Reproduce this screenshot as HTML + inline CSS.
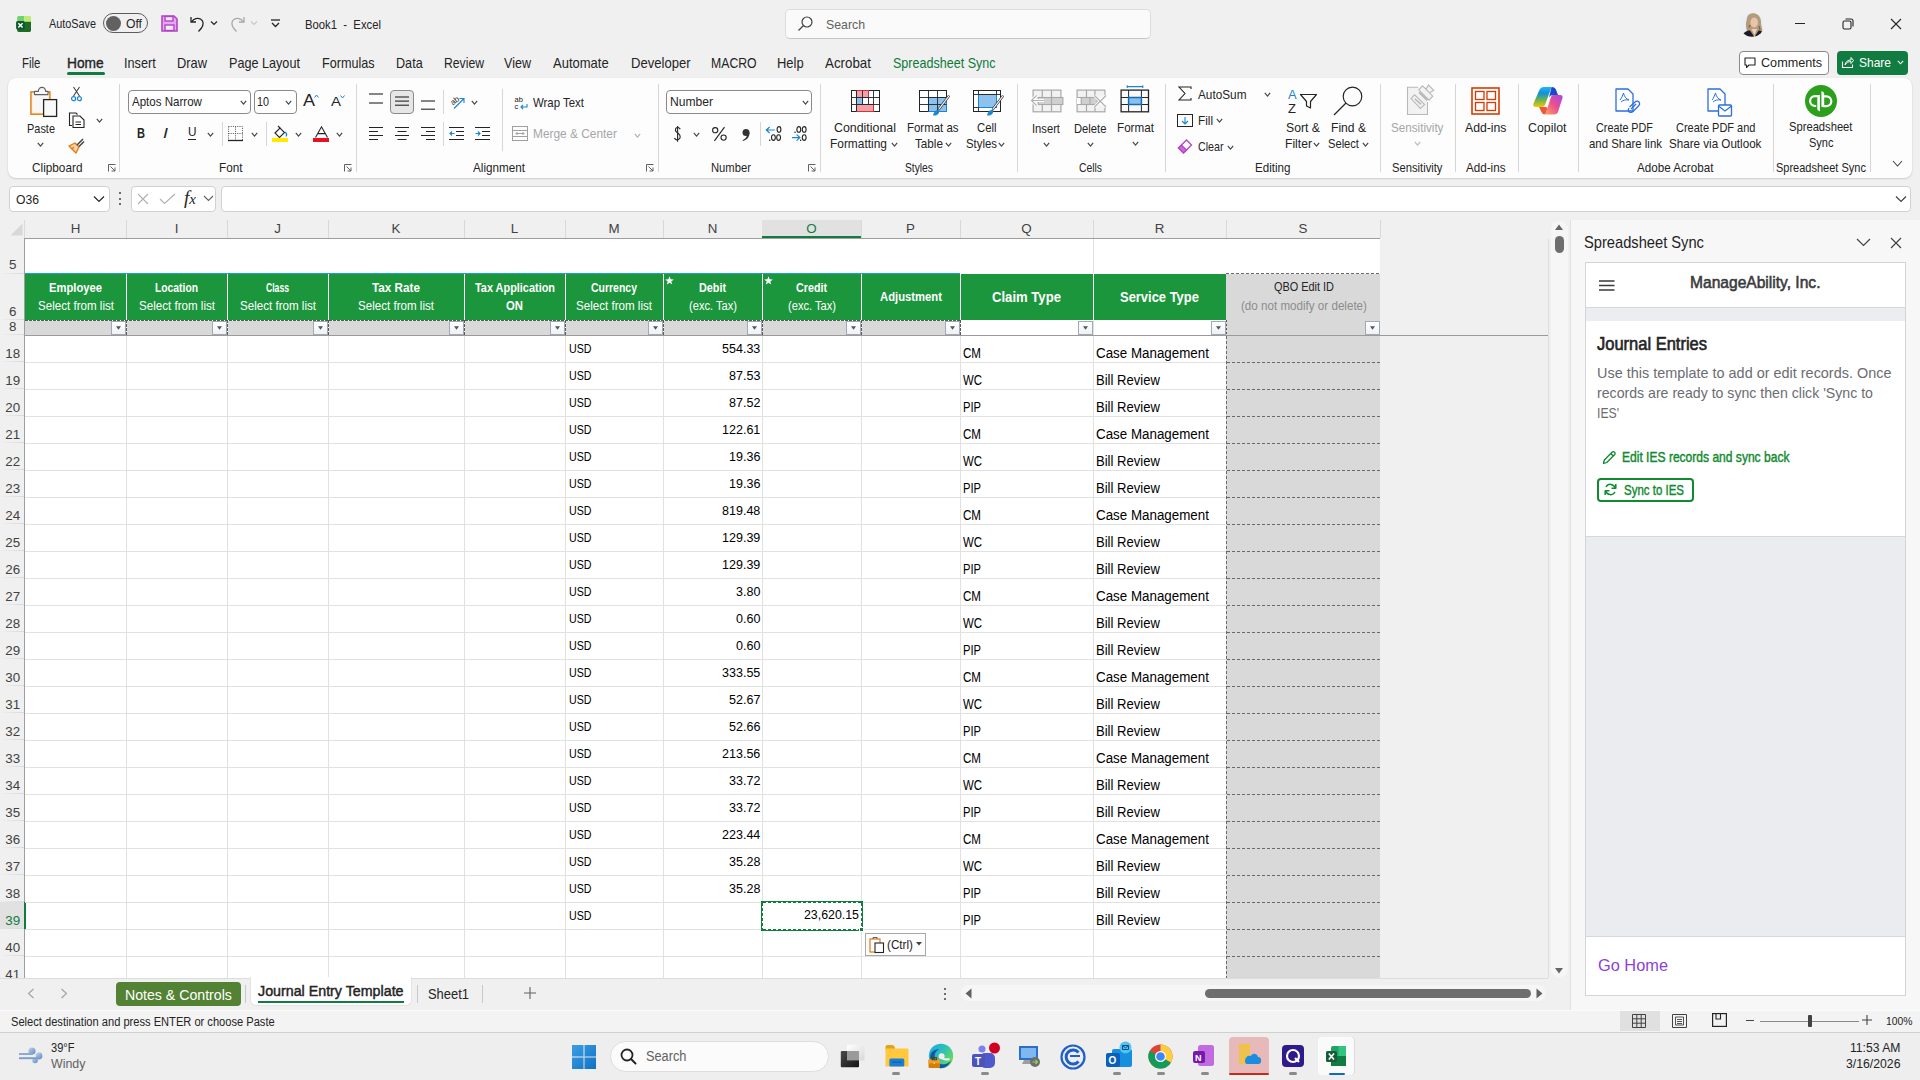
<!DOCTYPE html>
<html><head><meta charset="utf-8"><title>Book1 - Excel</title>
<style>
*{box-sizing:border-box;margin:0;padding:0}
html,body{width:1920px;height:1080px;overflow:hidden;background:#f0f0f0;font-family:"Liberation Sans",sans-serif;color:#242424}
body{position:relative}
.a{position:absolute}
svg.a{overflow:visible}
.t{position:absolute;white-space:pre;font-family:"Liberation Sans",sans-serif}
</style></head><body>
<div class="a" style="left:8px;top:78px;width:1904px;height:100px;background:#fdfdfd;border-radius:8px;box-shadow:0 1px 2px rgba(0,0,0,.14), 0 0 1px rgba(0,0,0,.10);"></div>
<svg class="a" style="left:29px;top:86px;" width="29" height="31" viewBox="0 0 29 31" fill="none"><rect x="1.9" y="5.9" width="19" height="22.3" fill="#fbeccc" stroke="#e07a10" stroke-width="1.4"/>
      <rect x="3.6" y="7.6" width="15.6" height="19" fill="#f7f7f7"/>
      <path d="M5.5 8.6 V5.4 H9.3 C9.5 3 11 1.4 13 1.4 C15 1.4 16.5 3 16.7 5.4 H19 V8.6 Z" fill="#f7f7f7" stroke="#616161" stroke-width="1.1" stroke-linejoin="round"/>
      <rect x="14.6" y="13.6" width="13" height="16.8" fill="#f9f9f9" stroke="#242424" stroke-width="1.3"/></svg>
<div class="t" style="left:27.00px;top:121.63px;font-size:13.20px;line-height:13.20px;color:#242424;transform:scaleX(0.8295);transform-origin:0 0;">Paste</div>
<svg class="a" style="left:37.0px;top:141.5px;" width="7" height="5" viewBox="0 0 7 5" fill="none"><path d="M.8 .8 L3.5 4.2 L6.2 .8" stroke="#424242" stroke-width="1.1"/></svg>
<svg class="a" style="left:71px;top:86px;" width="11" height="16" viewBox="0 0 11 16" fill="none"><path d="M2.5 1 L8.5 10 M8.5 1 L2.5 10" stroke="#424242" stroke-width="1.1"/><circle cx="2.6" cy="12.7" r="2" stroke="#1a86d0" stroke-width="1.2"/><circle cx="8.4" cy="12.7" r="2" stroke="#1a86d0" stroke-width="1.2"/></svg>
<svg class="a" style="left:68px;top:112px;" width="17" height="16" viewBox="0 0 17 16" fill="none"><path d="M4 13.5 H1.5 V1 H8 L9.5 2.5" stroke="#242424" stroke-width="1.1"/><path d="M5 4 H12 L16 8 V15.5 H5 Z" stroke="#242424" stroke-width="1.1"/><path d="M7.5 10 H13 M7.5 12.5 H13" stroke="#242424" stroke-width="1"/></svg>
<svg class="a" style="left:96.1px;top:118.0px;" width="7" height="5" viewBox="0 0 7 5" fill="none"><path d="M.8 .8 L3.5 4.2 L6.2 .8" stroke="#424242" stroke-width="1.1"/></svg>
<svg class="a" style="left:68px;top:137px;" width="17" height="17" viewBox="0 0 17 17" fill="none"><path d="M1 9 L8 16 L11 10 L7 6 Z" fill="#fbd0a0" stroke="#e07a10" stroke-width="1.3" stroke-linejoin="round"/><path d="M9 8 L15 2 M11 9.5 L16 4.5" stroke="#424242" stroke-width="1.5"/><path d="M3.5 12.5 L6 10" stroke="#e07a10" stroke-width="1.2"/></svg>
<div class="t" style="left:32.00px;top:160.63px;font-size:13.20px;line-height:13.20px;color:#242424;transform:scaleX(0.8938);transform-origin:0 0;">Clipboard</div>
<svg class="a" style="left:108px;top:164px;" width="8" height="8" viewBox="0 0 8 8" fill="none"><path d="M.5 7.5 V.5 H7.5" stroke="#616161" stroke-width="1"/><path d="M2.5 2.5 L7 7 M3.5 7 H7 V3.5" stroke="#616161" stroke-width="1"/></svg>
<div class="a" style="left:119px;top:84px;width:1px;height:88px;background:#d6d6d6;"></div>
<div class="a" style="left:128px;top:90px;width:123px;height:24px;background:#fff;border:1px solid #8a8a8a;border-radius:4px;"></div>
<div class="t" style="left:132.00px;top:94.83px;font-size:13.20px;line-height:13.20px;color:#242424;transform:scaleX(0.8754);transform-origin:0 0;">Aptos Narrow</div>
<svg class="a" style="left:240.0px;top:99.5px;" width="7" height="5" viewBox="0 0 7 5" fill="none"><path d="M.8 .8 L3.5 4.2 L6.2 .8" stroke="#424242" stroke-width="1.1"/></svg>
<div class="a" style="left:253.5px;top:90px;width:43px;height:24px;background:#fff;border:1px solid #8a8a8a;border-radius:4px;"></div>
<div class="t" style="left:257.00px;top:94.83px;font-size:13.20px;line-height:13.20px;color:#242424;transform:scaleX(0.8173);transform-origin:0 0;">10</div>
<svg class="a" style="left:285.0px;top:99.5px;" width="7" height="5" viewBox="0 0 7 5" fill="none"><path d="M.8 .8 L3.5 4.2 L6.2 .8" stroke="#424242" stroke-width="1.1"/></svg>
<div class="t" style="left:303.00px;top:91.61px;font-size:17.00px;line-height:17.00px;color:#242424;transform:scaleX(1.0582);transform-origin:0 0;">A</div>
<svg class="a" style="left:314px;top:94px;" width="5" height="4" viewBox="0 0 5 4" fill="none"><path d="M.5 3.5 L2.5 1 L4.5 3.5" stroke="#1a86d0" stroke-width="1"/></svg>
<div class="t" style="left:331.00px;top:95.00px;font-size:13.00px;line-height:13.00px;color:#242424;transform:scaleX(1.1532);transform-origin:0 0;">A</div>
<svg class="a" style="left:340px;top:95px;" width="5" height="4" viewBox="0 0 5 4" fill="none"><path d="M.5 .5 L2.5 3 L4.5 .5" stroke="#1a86d0" stroke-width="1"/></svg>
<div class="t" style="left:136.50px;top:126.15px;font-size:14.00px;line-height:14.00px;color:#242424;font-weight:bold;transform:scaleX(0.7912);transform-origin:0 0;">B</div>
<div class="t" style="left:163.00px;top:126.15px;font-size:14.00px;line-height:14.00px;color:#242424;transform:scaleX(1.2856);transform-origin:0 0;font-style:italic;">I</div>
<div class="t" style="left:187.50px;top:125.00px;font-size:13.00px;line-height:13.00px;color:#242424;transform:scaleX(0.9054);transform-origin:0 0;">U</div>
<div class="a" style="left:187.5px;top:139px;width:8.5px;height:1px;background:#242424;"></div>
<svg class="a" style="left:207.0px;top:131.5px;" width="7" height="5" viewBox="0 0 7 5" fill="none"><path d="M.8 .8 L3.5 4.2 L6.2 .8" stroke="#424242" stroke-width="1.1"/></svg>
<div class="a" style="left:221.5px;top:122px;width:1px;height:24px;background:#d6d6d6;"></div>
<svg class="a" style="left:228px;top:126px;" width="15" height="15" viewBox="0 0 15 15" fill="none"><path d="M.5 .5 H14.5 V14.5 H.5 Z M7.5 .5 V14.5 M.5 7.5 H14.5" stroke="#555" stroke-width="1" stroke-dasharray="1 1.2"/><path d="M0 14.5 H15" stroke="#242424" stroke-width="1.3"/></svg>
<svg class="a" style="left:251.0px;top:131.5px;" width="7" height="5" viewBox="0 0 7 5" fill="none"><path d="M.8 .8 L3.5 4.2 L6.2 .8" stroke="#424242" stroke-width="1.1"/></svg>
<div class="a" style="left:265.5px;top:122px;width:1px;height:24px;background:#d6d6d6;"></div>
<svg class="a" style="left:272px;top:125px;" width="17" height="17" viewBox="0 0 17 17" fill="none"><path d="M3 8 L8 3 L12.5 7.5 L7.5 12.5 Z" stroke="#242424" stroke-width="1.1"/><path d="M8 3 L6 1" stroke="#242424" stroke-width="1.1"/><path d="M13 7 C14.5 8 15 10 14 11.5" stroke="#1a86d0" stroke-width="1.3"/><rect x="0" y="13" width="16" height="4" fill="#ffeb00"/></svg>
<svg class="a" style="left:295.0px;top:131.5px;" width="7" height="5" viewBox="0 0 7 5" fill="none"><path d="M.8 .8 L3.5 4.2 L6.2 .8" stroke="#424242" stroke-width="1.1"/></svg>
<svg class="a" style="left:313px;top:125.5px;" width="17" height="12" viewBox="0 0 17 12" fill="none"><path d="M2.5 11.5 L8.5 .8 L14.5 11.5 M5 7.6 H12" stroke="#242424" stroke-width="1.1"/></svg>
<div class="a" style="left:313px;top:138px;width:16px;height:4px;background:#e81123;"></div>
<svg class="a" style="left:336.0px;top:131.5px;" width="7" height="5" viewBox="0 0 7 5" fill="none"><path d="M.8 .8 L3.5 4.2 L6.2 .8" stroke="#424242" stroke-width="1.1"/></svg>
<div class="t" style="left:218.60px;top:160.63px;font-size:13.20px;line-height:13.20px;color:#242424;transform:scaleX(0.8897);transform-origin:0 0;">Font</div>
<svg class="a" style="left:344px;top:164px;" width="8" height="8" viewBox="0 0 8 8" fill="none"><path d="M.5 7.5 V.5 H7.5" stroke="#616161" stroke-width="1"/><path d="M2.5 2.5 L7 7 M3.5 7 H7 V3.5" stroke="#616161" stroke-width="1"/></svg>
<div class="a" style="left:355.5px;top:84px;width:1px;height:88px;background:#d6d6d6;"></div>
<svg class="a" style="left:369px;top:93px;" width="16" height="12" viewBox="0 0 16 12" fill="none"><path d="M0 1 H14" stroke="#242424" stroke-width="1.1"/><path d="M0 10 H14" stroke="#242424" stroke-width="1.1"/></svg>
<div class="a" style="left:390px;top:90px;width:24px;height:24px;background:#e6e6e6;border:1px solid #8a8a8a;border-radius:4px;"></div>
<svg class="a" style="left:395px;top:96px;" width="16" height="12" viewBox="0 0 16 12" fill="none"><path d="M0 1.0 H14" stroke="#242424" stroke-width="1.1"/><path d="M0 5.1 H14" stroke="#242424" stroke-width="1.1"/><path d="M0 9.2 H14" stroke="#242424" stroke-width="1.1"/></svg>
<svg class="a" style="left:421px;top:100px;" width="16" height="12" viewBox="0 0 16 12" fill="none"><path d="M0 1.0 H14" stroke="#242424" stroke-width="1.1"/><path d="M0 9.2 H14" stroke="#242424" stroke-width="1.1"/></svg>
<div class="a" style="left:442.5px;top:90px;width:1px;height:24px;background:#d6d6d6;"></div>
<svg class="a" style="left:449px;top:93px;" width="17" height="17" viewBox="0 0 17 17" fill="none"><text x="1" y="10" font-size="8" transform="rotate(-40 6 7)" fill="#242424" font-family="Liberation Sans">ab</text><path d="M5 15.5 L15 5.5 M10.5 5.5 H15 V10" stroke="#1a86d0" stroke-width="1.1"/></svg>
<svg class="a" style="left:470.5px;top:99.5px;" width="7" height="5" viewBox="0 0 7 5" fill="none"><path d="M.8 .8 L3.5 4.2 L6.2 .8" stroke="#424242" stroke-width="1.1"/></svg>
<div class="a" style="left:501.5px;top:89px;width:1px;height:62px;background:#d6d6d6;"></div>
<svg class="a" style="left:514px;top:95px;" width="15" height="15" viewBox="0 0 15 15" fill="none"><text x="0.5" y="6.5" font-size="7.5" fill="#242424" font-family="Liberation Sans">ab</text><text x="0.5" y="14" font-size="7.5" fill="#242424" font-family="Liberation Sans">c</text><path d="M13 9 V12 H7 M9 10 L7 12 L9 14" stroke="#1a86d0" stroke-width="1.1"/></svg>
<div class="t" style="left:532.70px;top:95.83px;font-size:13.20px;line-height:13.20px;color:#242424;transform:scaleX(0.8653);transform-origin:0 0;">Wrap Text</div>
<svg class="a" style="left:369px;top:127px;" width="15" height="14" viewBox="0 0 15 14" fill="none"><path d="M0 .5 H14 M0 4.5 H9 M0 8.5 H14 M0 12.5 H9" stroke="#242424" stroke-width="1.1"/></svg>
<svg class="a" style="left:395px;top:127px;" width="15" height="14" viewBox="0 0 15 14" fill="none"><path d="M0 .5 H14 M2.5 4.5 H11.5 M0 8.5 H14 M2.5 12.5 H11.5" stroke="#242424" stroke-width="1.1"/></svg>
<svg class="a" style="left:421px;top:127px;" width="15" height="14" viewBox="0 0 15 14" fill="none"><path d="M0 .5 H14 M5 4.5 H14 M0 8.5 H14 M5 12.5 H14" stroke="#242424" stroke-width="1.1"/></svg>
<div class="a" style="left:442.5px;top:122px;width:1px;height:24px;background:#d6d6d6;"></div>
<svg class="a" style="left:449px;top:127px;" width="16" height="14" viewBox="0 0 16 14" fill="none"><path d="M0 .5 H15 M7 4.5 H15 M7 8.5 H15 M0 12.5 H15" stroke="#242424" stroke-width="1.1"/><path d="M5.5 6.5 H.8 M3 4.5 L1 6.5 L3 8.5" stroke="#1a86d0" stroke-width="1.1"/></svg>
<svg class="a" style="left:475px;top:127px;" width="16" height="14" viewBox="0 0 16 14" fill="none"><path d="M0 .5 H15 M7 4.5 H15 M7 8.5 H15 M0 12.5 H15" stroke="#242424" stroke-width="1.1"/><path d="M.5 6.5 H5.2 M3 4.5 L5 6.5 L3 8.5" stroke="#1a86d0" stroke-width="1.1"/></svg>
<svg class="a" style="left:512px;top:126px;" width="16" height="15" viewBox="0 0 16 15" fill="none"><rect x=".5" y=".5" width="15" height="14" stroke="#a0a0a0" stroke-width="1"/><path d="M.5 4.5 H15.5 M.5 10.5 H15.5 M4 7.5 H12 M5.5 6 L4 7.5 L5.5 9 M10.5 6 L12 7.5 L10.5 9" stroke="#a0a0a0" stroke-width="1"/></svg>
<div class="t" style="left:532.70px;top:127.33px;font-size:13.20px;line-height:13.20px;color:#a6a6a6;transform:scaleX(0.9015);transform-origin:0 0;">Merge &amp; Center</div>
<svg class="a" style="left:634.1px;top:132.5px;" width="7" height="5" viewBox="0 0 7 5" fill="none"><path d="M.8 .8 L3.5 4.2 L6.2 .8" stroke="#b0b0b0" stroke-width="1.1"/></svg>
<div class="t" style="left:472.60px;top:160.63px;font-size:13.20px;line-height:13.20px;color:#242424;transform:scaleX(0.8859);transform-origin:0 0;">Alignment</div>
<svg class="a" style="left:646px;top:164px;" width="8" height="8" viewBox="0 0 8 8" fill="none"><path d="M.5 7.5 V.5 H7.5" stroke="#616161" stroke-width="1"/><path d="M2.5 2.5 L7 7 M3.5 7 H7 V3.5" stroke="#616161" stroke-width="1"/></svg>
<div class="a" style="left:657.5px;top:84px;width:1px;height:88px;background:#d6d6d6;"></div>
<div class="a" style="left:666px;top:90px;width:146px;height:24px;background:#fff;border:1px solid #8a8a8a;border-radius:4px;"></div>
<div class="t" style="left:670.00px;top:94.83px;font-size:13.20px;line-height:13.20px;color:#242424;transform:scaleX(0.9159);transform-origin:0 0;">Number</div>
<svg class="a" style="left:801.5px;top:99.5px;" width="7" height="5" viewBox="0 0 7 5" fill="none"><path d="M.8 .8 L3.5 4.2 L6.2 .8" stroke="#424242" stroke-width="1.1"/></svg>
<svg class="a" style="left:673.5px;top:126px;" width="8" height="16" viewBox="0 0 8 16" fill="none"><path d="M6.2 3.2 C5.6 1.6 4 1.2 3 1.6 C.8 2.4 .9 5.2 3.2 6.6 L4.6 7.7 C6.8 9.4 6.8 12.6 4.2 13.6 C2.6 14.2 1.1 13.6 .4 12.1" stroke="#242424" stroke-width="1.1"/><path d="M3.6 0 V15.8" stroke="#242424" stroke-width="1.1"/></svg>
<svg class="a" style="left:692.5px;top:131.5px;" width="7" height="5" viewBox="0 0 7 5" fill="none"><path d="M.8 .8 L3.5 4.2 L6.2 .8" stroke="#424242" stroke-width="1.1"/></svg>
<svg class="a" style="left:711.5px;top:127px;" width="15" height="14" viewBox="0 0 15 14" fill="none"><circle cx="3.2" cy="3.2" r="2.6" stroke="#242424" stroke-width="1.1"/><circle cx="11.6" cy="10.6" r="2.6" stroke="#242424" stroke-width="1.1"/><path d="M12.5 .2 L2.4 13.8" stroke="#242424" stroke-width="1.1"/></svg>
<svg class="a" style="left:741.5px;top:128.5px;" width="8" height="12" viewBox="0 0 8 12" fill="none"><circle cx="4" cy="3.6" r="3.5" fill="#333"/><path d="M7.5 3.6 C7.6 8 5.2 11.1 1 12 L.6 11.2 C3.6 10 5 8 5 5.8 Z" fill="#333"/></svg>
<div class="a" style="left:759.5px;top:122px;width:1px;height:24px;background:#d6d6d6;"></div>
<svg class="a" style="left:765px;top:126px;" width="17" height="16" viewBox="0 0 17 16" fill="none"><path d="M9.8 4 H1.5 M4.6 1 L1.3 4 L4.6 7" stroke="#1a86d0" stroke-width="1.2"/><ellipse cx="14" cy="3.4" rx="1.9" ry="2.8" stroke="#242424" stroke-width="1.1"/><rect x="4" y="13.6" width="1.3" height="1.3" fill="#242424"/><ellipse cx="8.4" cy="11.6" rx="1.9" ry="2.8" stroke="#242424" stroke-width="1.1"/><ellipse cx="13.6" cy="11.6" rx="1.9" ry="2.8" stroke="#242424" stroke-width="1.1"/></svg>
<svg class="a" style="left:791px;top:126px;" width="17" height="16" viewBox="0 0 17 16" fill="none"><rect x="3.4" y="5.6" width="1.3" height="1.3" fill="#242424"/><ellipse cx="7.8" cy="3.4" rx="1.9" ry="2.8" stroke="#242424" stroke-width="1.1"/><ellipse cx="13.2" cy="3.4" rx="1.9" ry="2.8" stroke="#242424" stroke-width="1.1"/><path d="M1 11.6 H8.6 M5.6 8.6 L8.9 11.6 L5.6 14.6" stroke="#1a86d0" stroke-width="1.2"/><rect x="9" y="13.6" width="1.3" height="1.3" fill="#242424"/><ellipse cx="13.2" cy="11.6" rx="1.9" ry="2.8" stroke="#242424" stroke-width="1.1"/></svg>
<div class="t" style="left:710.90px;top:160.63px;font-size:13.20px;line-height:13.20px;color:#242424;transform:scaleX(0.8520);transform-origin:0 0;">Number</div>
<svg class="a" style="left:808px;top:164px;" width="8" height="8" viewBox="0 0 8 8" fill="none"><path d="M.5 7.5 V.5 H7.5" stroke="#616161" stroke-width="1"/><path d="M2.5 2.5 L7 7 M3.5 7 H7 V3.5" stroke="#616161" stroke-width="1"/></svg>
<div class="a" style="left:819.5px;top:84px;width:1px;height:88px;background:#d6d6d6;"></div>
<svg class="a" style="left:851px;top:90px;" width="29" height="22" viewBox="0 0 29 22" fill="none"><rect x=".5" y=".5" width="28" height="21" fill="#fff" stroke="#242424" stroke-width="1"/>
      <rect x="5.5" y=".5" width="12" height="7" fill="#f4a0a8" stroke="#d13438" stroke-width="1"/>
      <rect x="5.5" y="7.5" width="6" height="7" fill="#8dc1ef" stroke="#1a86d0" stroke-width="1"/>
      <rect x="5.5" y="14.5" width="17" height="7" fill="#f4a0a8" stroke="#d13438" stroke-width="1"/>
      <path d="M5.5 .5 V21.5 M17.5 7.5 V14.5 M22.5 .5 V14.5 M11.5 .5 V7.5 M11.5 14.5 V7.5 M.5 7.5 H28.5 M.5 14.5 H28.5" stroke="#242424" stroke-width=".9"/></svg>
<div class="t" style="left:834.00px;top:120.83px;font-size:13.20px;line-height:13.20px;color:#242424;transform:scaleX(0.9387);transform-origin:0 0;">Conditional</div>
<div class="t" style="left:830.40px;top:136.53px;font-size:13.20px;line-height:13.20px;color:#242424;transform:scaleX(0.9035);transform-origin:0 0;">Formatting</div>
<svg class="a" style="left:890.5px;top:142.0px;" width="7" height="5" viewBox="0 0 7 5" fill="none"><path d="M.8 .8 L3.5 4.2 L6.2 .8" stroke="#424242" stroke-width="1.1"/></svg>
<svg class="a" style="left:919px;top:90px;" width="31" height="28" viewBox="0 0 31 28" fill="none"><rect x=".5" y=".5" width="27" height="21" fill="#fff" stroke="#242424" stroke-width="1"/>
      <rect x="9.5" y="7.5" width="18" height="14" fill="#8dc1ef" stroke="#1a86d0"/>
      <path d="M9.5 .5 V21.5 M18.5 .5 V21.5 M.5 7.5 H27.5 M.5 14.5 H27.5" stroke="#242424" stroke-width=".9"/>
      <path d="M29.5 6.5 L20 19" stroke="#424242" stroke-width="2.6" stroke-linecap="round"/><path d="M29.5 6.5 L20 19" stroke="#fff" stroke-width="1.2" stroke-linecap="round"/>
      <path d="M14 25.5 C15 21 17 19.5 20 20 C21 22 19.5 26 14 25.5 Z" fill="#1a86d0"/></svg>
<div class="t" style="left:907.40px;top:120.83px;font-size:13.20px;line-height:13.20px;color:#242424;transform:scaleX(0.8668);transform-origin:0 0;">Format as</div>
<div class="t" style="left:915.00px;top:136.53px;font-size:13.20px;line-height:13.20px;color:#242424;transform:scaleX(0.8873);transform-origin:0 0;">Table</div>
<svg class="a" style="left:945.0px;top:142.0px;" width="7" height="5" viewBox="0 0 7 5" fill="none"><path d="M.8 .8 L3.5 4.2 L6.2 .8" stroke="#424242" stroke-width="1.1"/></svg>
<svg class="a" style="left:973px;top:90px;" width="31" height="28" viewBox="0 0 31 28" fill="none"><rect x=".5" y=".5" width="27" height="21" fill="#fff" stroke="#242424" stroke-width="1"/>
      <rect x="5.5" y="4.5" width="18" height="13" fill="#8dc1ef" stroke="#1a86d0"/>
      <path d="M.5 4.5 H27.5 M5.5 .5 V4.5 M23.5 .5 V4.5 M.5 17.5 H5.5 M5.5 17.5 V21.5" stroke="#242424" stroke-width=".9"/>
      <path d="M29.5 6.5 L20 19" stroke="#424242" stroke-width="2.6" stroke-linecap="round"/><path d="M29.5 6.5 L20 19" stroke="#fff" stroke-width="1.2" stroke-linecap="round"/>
      <path d="M14 25.5 C15 21 17 19.5 20 20 C21 22 19.5 26 14 25.5 Z" fill="#1a86d0"/></svg>
<div class="t" style="left:977.00px;top:120.83px;font-size:13.20px;line-height:13.20px;color:#242424;transform:scaleX(0.8575);transform-origin:0 0;">Cell</div>
<div class="t" style="left:966.00px;top:136.53px;font-size:13.20px;line-height:13.20px;color:#242424;transform:scaleX(0.8624);transform-origin:0 0;">Styles</div>
<svg class="a" style="left:998.0px;top:142.0px;" width="7" height="5" viewBox="0 0 7 5" fill="none"><path d="M.8 .8 L3.5 4.2 L6.2 .8" stroke="#424242" stroke-width="1.1"/></svg>
<div class="t" style="left:904.50px;top:160.63px;font-size:13.20px;line-height:13.20px;color:#242424;transform:scaleX(0.7789);transform-origin:0 0;">Styles</div>
<div class="a" style="left:1017px;top:84px;width:1px;height:88px;background:#d6d6d6;"></div>
<svg class="a" style="left:1030px;top:89px;" width="34" height="24" viewBox="0 0 34 24" fill="none"><rect x="3.1" y="1.1" width="27.8" height="21.7" fill="#f2f2f2" stroke="#a8a8a8" stroke-width="1.2"/>
      <path d="M12.3 1.1 V22.8 M21.5 1.1 V22.8" stroke="#a8a8a8" stroke-width="1.2"/>
      <rect x="8.2" y="8.5" width="24.7" height="7" fill="#d0d0d0" stroke="#a8a8a8" stroke-width="1.1"/>
      <path d="M21.5 8.5 V15.5" stroke="#a8a8a8" stroke-width="1.1"/>
      <path d="M14 11.5 H2 M6.5 6.5 L1.5 11.5 L6.5 16.5" stroke="#ffffff" stroke-width="3"/>
      <path d="M14 11.5 H2 M6.5 6.5 L1.5 11.5 L6.5 16.5" stroke="#b0b0b0" stroke-width="1.2"/></svg>
<div class="t" style="left:1032.40px;top:121.83px;font-size:13.20px;line-height:13.20px;color:#242424;transform:scaleX(0.8481);transform-origin:0 0;">Insert</div>
<svg class="a" style="left:1042.5px;top:142.0px;" width="7" height="5" viewBox="0 0 7 5" fill="none"><path d="M.8 .8 L3.5 4.2 L6.2 .8" stroke="#424242" stroke-width="1.1"/></svg>
<svg class="a" style="left:1076px;top:89px;" width="32" height="24" viewBox="0 0 32 24" fill="none"><rect x="1.1" y="1.1" width="27.8" height="21.7" fill="#f2f2f2" stroke="#a8a8a8" stroke-width="1.2"/>
      <path d="M10.5 1.1 V22.8 M19 1.1 V22.8" stroke="#a8a8a8" stroke-width="1.2"/>
      <rect x="1" y="8.5" width="29" height="7" fill="#ffffff" stroke="none"/>
      <path d="M1.1 8.5 H22 M1.1 15.5 H22" stroke="#a8a8a8" stroke-width="1.2"/>
      <rect x="5.2" y="8.5" width="16" height="7" fill="#d0d0d0" stroke="#a8a8a8" stroke-width="1.1"/>
      <path d="M14 8.5 V15.5" stroke="#a8a8a8" stroke-width="1.1"/>
      <path d="M18.5 6.5 L30 18 M30 6.5 L18.5 18" stroke="#ffffff" stroke-width="3"/>
      <path d="M18.5 6.5 L30 18 M30 6.5 L18.5 18" stroke="#b0b0b0" stroke-width="1.2"/></svg>
<div class="t" style="left:1074.40px;top:121.83px;font-size:13.20px;line-height:13.20px;color:#242424;transform:scaleX(0.8517);transform-origin:0 0;">Delete</div>
<svg class="a" style="left:1087.0px;top:142.0px;" width="7" height="5" viewBox="0 0 7 5" fill="none"><path d="M.8 .8 L3.5 4.2 L6.2 .8" stroke="#424242" stroke-width="1.1"/></svg>
<svg class="a" style="left:1120px;top:85px;" width="30" height="28" viewBox="0 0 30 28" fill="none"><path d="M7.2 1.6 H22.8 M7.2 .2 V3 M22.8 .2 V3" stroke="#1a86d0" stroke-width="1.1"/>
      <rect x="1.1" y="5.1" width="27.4" height="21.7" fill="#fafafa" stroke="#242424" stroke-width="1.3"/>
      <path d="M8.6 5.1 V26.8 M21.4 5.1 V26.8 M1.1 12.5 H28.5 M1.1 19.5 H28.5" stroke="#242424" stroke-width="1"/>
      <rect x="8.6" y="12.5" width="12.8" height="7" fill="#8cc0ec" stroke="#0f6cbd" stroke-width="1.5"/></svg>
<div class="t" style="left:1116.50px;top:120.63px;font-size:13.20px;line-height:13.20px;color:#242424;transform:scaleX(0.8850);transform-origin:0 0;">Format</div>
<svg class="a" style="left:1131.5px;top:141.0px;" width="7" height="5" viewBox="0 0 7 5" fill="none"><path d="M.8 .8 L3.5 4.2 L6.2 .8" stroke="#424242" stroke-width="1.1"/></svg>
<div class="t" style="left:1079.00px;top:160.63px;font-size:13.20px;line-height:13.20px;color:#242424;transform:scaleX(0.7839);transform-origin:0 0;">Cells</div>
<div class="a" style="left:1164.5px;top:84px;width:1px;height:88px;background:#d6d6d6;"></div>
<svg class="a" style="left:1178px;top:86px;" width="14" height="15" viewBox="0 0 14 15" fill="none"><path d="M13 3 V1 H1 L7 7.5 L1 14 H13 V12" stroke="#242424" stroke-width="1.1"/></svg>
<div class="t" style="left:1197.50px;top:88.03px;font-size:13.20px;line-height:13.20px;color:#242424;transform:scaleX(0.8932);transform-origin:0 0;">AutoSum</div>
<svg class="a" style="left:1263.9px;top:92.0px;" width="7" height="5" viewBox="0 0 7 5" fill="none"><path d="M.8 .8 L3.5 4.2 L6.2 .8" stroke="#424242" stroke-width="1.1"/></svg>
<svg class="a" style="left:1177px;top:112px;" width="16" height="15" viewBox="0 0 16 15" fill="none"><rect x=".5" y="2.5" width="15" height="12" stroke="#242424"/><path d="M.5 2.5 H15.5" stroke="#242424" stroke-width="1"/><path d="M8 5 V12 M5 9 L8 12 L11 9" stroke="#1a86d0" stroke-width="1.1"/></svg>
<div class="t" style="left:1197.50px;top:113.83px;font-size:13.20px;line-height:13.20px;color:#242424;transform:scaleX(0.8896);transform-origin:0 0;">Fill</div>
<svg class="a" style="left:1215.5px;top:117.5px;" width="7" height="5" viewBox="0 0 7 5" fill="none"><path d="M.8 .8 L3.5 4.2 L6.2 .8" stroke="#424242" stroke-width="1.1"/></svg>
<svg class="a" style="left:1177px;top:138px;" width="16" height="16" viewBox="0 0 16 16" fill="none"><path d="M1.5 10 L9.5 2 L14.5 7 L6.5 15 Z" fill="#fff" stroke="#b146c2" stroke-width="1.3"/><path d="M1.5 10 L4.5 7 L9.5 12 L6.5 15 Z" fill="#c86dd7" stroke="#b146c2" stroke-width="1.2"/></svg>
<div class="t" style="left:1197.50px;top:140.13px;font-size:13.20px;line-height:13.20px;color:#242424;transform:scaleX(0.8084);transform-origin:0 0;">Clear</div>
<svg class="a" style="left:1226.5px;top:144.5px;" width="7" height="5" viewBox="0 0 7 5" fill="none"><path d="M.8 .8 L3.5 4.2 L6.2 .8" stroke="#424242" stroke-width="1.1"/></svg>
<svg class="a" style="left:1288px;top:87px;" width="31" height="27" viewBox="0 0 31 27" fill="none"><text x="0" y="12" font-size="13" fill="#1a86d0" font-family="Liberation Sans">A</text><text x="0" y="26" font-size="13" fill="#242424" font-family="Liberation Sans">Z</text><path d="M12.5 7.5 H28.5 L22.5 14.5 V21 L18.5 19 V14.5 Z" stroke="#242424" stroke-width="1.2" stroke-linejoin="round"/></svg>
<div class="t" style="left:1286.00px;top:120.63px;font-size:13.20px;line-height:13.20px;color:#242424;transform:scaleX(0.9269);transform-origin:0 0;">Sort &amp;</div>
<div class="t" style="left:1284.70px;top:136.53px;font-size:13.20px;line-height:13.20px;color:#242424;transform:scaleX(0.9204);transform-origin:0 0;">Filter</div>
<svg class="a" style="left:1312.5px;top:142.0px;" width="7" height="5" viewBox="0 0 7 5" fill="none"><path d="M.8 .8 L3.5 4.2 L6.2 .8" stroke="#424242" stroke-width="1.1"/></svg>
<svg class="a" style="left:1333px;top:86px;" width="31" height="30" viewBox="0 0 31 30" fill="none"><circle cx="19.5" cy="10.5" r="9.3" stroke="#242424" stroke-width="1.2"/><path d="M13 17 L1 29" stroke="#242424" stroke-width="1.3"/></svg>
<div class="t" style="left:1331.40px;top:120.63px;font-size:13.20px;line-height:13.20px;color:#242424;transform:scaleX(0.9174);transform-origin:0 0;">Find &amp;</div>
<div class="t" style="left:1328.00px;top:136.53px;font-size:13.20px;line-height:13.20px;color:#242424;transform:scaleX(0.8450);transform-origin:0 0;">Select</div>
<svg class="a" style="left:1361.5px;top:142.0px;" width="7" height="5" viewBox="0 0 7 5" fill="none"><path d="M.8 .8 L3.5 4.2 L6.2 .8" stroke="#424242" stroke-width="1.1"/></svg>
<div class="t" style="left:1254.60px;top:160.63px;font-size:13.20px;line-height:13.20px;color:#242424;transform:scaleX(0.8795);transform-origin:0 0;">Editing</div>
<div class="a" style="left:1380px;top:84px;width:1px;height:88px;background:#d6d6d6;"></div>
<svg class="a" style="left:1400px;top:82px;" width="40" height="36" viewBox="0 0 40 36" fill="none"><rect x="7.5" y="5.3" width="20" height="27.2" fill="#f2f2f2"/><path d="M18 5.3 H7.5 V32.5 H27.5 V20" stroke="#b8b8b8" stroke-width="1.1"/><path d="M11 16.6 L14.6 12.8 L24.6 22.5 L20.4 26.4 Z" fill="#f2f2f2" stroke="#b8b8b8" stroke-width="1.1"/><path d="M14.8 16.8 L21 22.4" stroke="#b8b8b8" stroke-width="1.5"/><path d="M26 7.6 L28.4 3 L33.8 8.4 L30 10.6" fill="#f2f2f2" stroke="#b8b8b8" stroke-width="1.1"/><path d="M18.8 7.8 L22.6 3.8 L32.8 14.2 L29 18.2 Z" fill="#f2f2f2" stroke="#b8b8b8" stroke-width="1.1"/><path d="M19.2 10.2 L27.4 18.2" stroke="#b8b8b8" stroke-width="2.2"/></svg>
<div class="t" style="left:1391.40px;top:120.83px;font-size:13.20px;line-height:13.20px;color:#a6a6a6;transform:scaleX(0.8835);transform-origin:0 0;">Sensitivity</div>
<svg class="a" style="left:1414.0px;top:141.0px;" width="7" height="5" viewBox="0 0 7 5" fill="none"><path d="M.8 .8 L3.5 4.2 L6.2 .8" stroke="#b8b8b8" stroke-width="1.1"/></svg>
<div class="t" style="left:1392.40px;top:160.63px;font-size:13.20px;line-height:13.20px;color:#242424;transform:scaleX(0.8499);transform-origin:0 0;">Sensitivity</div>
<div class="a" style="left:1454.5px;top:84px;width:1px;height:88px;background:#d6d6d6;"></div>
<svg class="a" style="left:1471px;top:87px;" width="29" height="28" viewBox="0 0 29 28" fill="none"><rect x="1" y="1" width="27" height="26" stroke="#d83b01" stroke-width="1.6"/><rect x="4.5" y="4.5" width="8.5" height="8" stroke="#d83b01" stroke-width="1.3"/><rect x="16" y="4.5" width="8.5" height="8" stroke="#d83b01" stroke-width="1.3"/><rect x="4.5" y="15.5" width="8.5" height="8" stroke="#d83b01" stroke-width="1.3"/><rect x="16" y="15.5" width="8.5" height="8" stroke="#d83b01" stroke-width="1.3"/></svg>
<div class="t" style="left:1465.30px;top:120.83px;font-size:13.20px;line-height:13.20px;color:#242424;transform:scaleX(0.9272);transform-origin:0 0;">Add-ins</div>
<div class="t" style="left:1466.00px;top:160.63px;font-size:13.20px;line-height:13.20px;color:#242424;transform:scaleX(0.8825);transform-origin:0 0;">Add-ins</div>
<div class="a" style="left:1517.5px;top:84px;width:1px;height:88px;background:#d6d6d6;"></div>
<svg class="a" style="left:1533px;top:87px;" width="30" height="28" viewBox="0 0 30 28" fill="none"><defs><linearGradient id="cpA" x1="0" y1="0" x2="0" y2="1"><stop offset="0" stop-color="#22b4f8"/><stop offset=".3" stop-color="#1190d8"/><stop offset=".6" stop-color="#5cb060"/><stop offset="1" stop-color="#f2c800"/></linearGradient>
      <linearGradient id="cpB" x1="1" y1="0" x2="0" y2="1"><stop offset="0" stop-color="#a246ec"/><stop offset=".5" stop-color="#ea5090"/><stop offset="1" stop-color="#fba358"/></linearGradient></defs>
      <path d="M18.5 0 Q22.5 0 23.5 4 L25 8 H19.5 Q17 8 16 10.5 Z" fill="#1a48d0"/>
      <path d="M6 20 H12.8 Q14.8 20 14.3 22 L12.3 27.5 Q9.3 27.5 8.5 25 Z" fill="#f0563a"/>
      <path d="M6.6 2.6 Q7.6 0 10.6 0 H18.5 L12 18 Q11 20 8.5 20 H2.6 Q-.2 20 .3 17 Z" fill="url(#cpA)"/>
      <path d="M19.8 8 H27 Q30.2 8 29.4 11.2 L24.8 25.4 Q23.8 27.5 21.3 27.5 H12.3 L18 10 Q18.7 8 19.8 8 Z" fill="url(#cpB)"/></svg>
<div class="t" style="left:1528.40px;top:120.83px;font-size:13.20px;line-height:13.20px;color:#242424;transform:scaleX(0.9370);transform-origin:0 0;">Copilot</div>
<div class="a" style="left:1577.5px;top:84px;width:1px;height:88px;background:#d6d6d6;"></div>
<svg class="a" style="left:1614px;top:88px;" width="28" height="30" viewBox="0 0 28 30" fill="none"><path d="M2 1 H14 L19 6 V23 H2 Z" stroke="#2c6ee0" stroke-width="1.3" stroke-linejoin="round" fill="#fff"/><path d="M6 12 C8 10 9 6 9.5 5 C10 8 12 11 15 12 M7 14 C9 12 12 11.5 15 12" stroke="#2c6ee0" stroke-width="1"/><path d="M15.5 19 L21 14 C22.5 12.5 25 13 25.5 15 C26 16 25.5 17 24.5 18 L19 23.5 C17.5 25 15 24.5 14.5 23 C14 22 14.3 21 15 20 M17 21 L22 16" stroke="#2c6ee0" stroke-width="1.3"/></svg>
<div class="t" style="left:1596.30px;top:120.83px;font-size:13.20px;line-height:13.20px;color:#242424;transform:scaleX(0.8179);transform-origin:0 0;">Create PDF</div>
<div class="t" style="left:1588.50px;top:136.53px;font-size:13.20px;line-height:13.20px;color:#242424;transform:scaleX(0.8650);transform-origin:0 0;">and Share link</div>
<svg class="a" style="left:1706px;top:88px;" width="27" height="30" viewBox="0 0 27 30" fill="none"><path d="M2 1 H14 L19 6 V23 H2 Z" stroke="#2c6ee0" stroke-width="1.3" stroke-linejoin="round" fill="#fff"/><path d="M6 12 C8 10 9 6 9.5 5 C10 8 12 11 15 12 M7 14 C9 12 12 11.5 15 12" stroke="#2c6ee0" stroke-width="1"/><rect x="12.5" y="17" width="13" height="11" rx="1" fill="#fff" stroke="#2c6ee0" stroke-width="1.3"/><path d="M12.5 18 L19 23 L25.5 18" stroke="#2c6ee0" stroke-width="1.2"/></svg>
<div class="t" style="left:1675.60px;top:120.83px;font-size:13.20px;line-height:13.20px;color:#242424;transform:scaleX(0.8335);transform-origin:0 0;">Create PDF and</div>
<div class="t" style="left:1669.40px;top:136.53px;font-size:13.20px;line-height:13.20px;color:#242424;transform:scaleX(0.8816);transform-origin:0 0;">Share via Outlook</div>
<div class="t" style="left:1637.00px;top:160.63px;font-size:13.20px;line-height:13.20px;color:#242424;transform:scaleX(0.8833);transform-origin:0 0;">Adobe Acrobat</div>
<div class="a" style="left:1772.5px;top:84px;width:1px;height:88px;background:#d6d6d6;"></div>
<svg class="a" style="left:1805px;top:85px;" width="32" height="32" viewBox="0 0 32 32" fill="none"><circle cx="16" cy="16" r="16" fill="#2ca01c"/><path d="M13.6 11.2 H10 A4.9 4.9 0 0 0 10 21 H11.2" stroke="#fff" stroke-width="2.2"/><path d="M12.3 10.1 H14.9 V26.2 C13.3 26 12.3 25 12.3 23.5 Z" fill="#fff"/><path d="M18 11.3 H21.4 A4.9 4.9 0 0 1 21.4 21.1 H18" stroke="#fff" stroke-width="2.2"/><path d="M16.4 6.2 C17.9 6.3 19.2 7.3 19.2 8.8 V22.1 H16.4 Z" fill="#fff"/></svg>
<div class="t" style="left:1789.30px;top:119.83px;font-size:13.20px;line-height:13.20px;color:#242424;transform:scaleX(0.8483);transform-origin:0 0;">Spreadsheet</div>
<div class="t" style="left:1808.90px;top:135.83px;font-size:13.20px;line-height:13.20px;color:#242424;transform:scaleX(0.8349);transform-origin:0 0;">Sync</div>
<div class="t" style="left:1776.00px;top:160.63px;font-size:13.20px;line-height:13.20px;color:#242424;transform:scaleX(0.8343);transform-origin:0 0;">Spreadsheet Sync</div>
<div class="a" style="left:1869.5px;top:84px;width:1px;height:88px;background:#d6d6d6;"></div>
<svg class="a" style="left:1892px;top:160px;" width="11" height="7" viewBox="0 0 11 7" fill="none"><path d="M1 1 L5.5 6 L10 1" stroke="#424242" stroke-width="1.1"/></svg>
<svg class="a" style="left:15px;top:15px;" width="17" height="17" viewBox="0 0 17 17" fill="none"><path d="M2.2 6.8 V2.6 C2.2 1.7 2.9 1 3.8 1 H9.2 V6.8 Z" fill="#6fd36a"/>
      <path d="M9.2 1 H15 C15.6 1 16 1.4 16 2 V6.8 H9.2 Z" fill="#bdeb73"/>
      <path d="M2.2 6.8 H16 V15.6 C16 16.4 15.4 17 14.6 17 H3.6 C2.8 17 2.2 16.4 2.2 15.6 Z" fill="#1e6b26"/>
      <rect x="1.1" y="6" width="8.6" height="8.6" rx="1.6" fill="#0b5630"/>
      <path d="M3.3 8.2 L7.6 12.6 M7.6 8.2 L3.3 12.6" stroke="#fff" stroke-width="1.5"/></svg>
<div class="t" style="left:48.50px;top:16.77px;font-size:13.50px;line-height:13.50px;color:#242424;transform:scaleX(0.8028);transform-origin:0 0;">AutoSave</div>
<div class="a" style="left:103px;top:13px;width:45px;height:20px;border:1.2px solid #5c5c5c;border-radius:10px;"></div>
<div class="a" style="left:105.5px;top:15.5px;width:15px;height:15px;background:#616161;border-radius:50%;"></div>
<div class="t" style="left:125.50px;top:16.77px;font-size:13.50px;line-height:13.50px;color:#242424;transform:scaleX(0.9010);transform-origin:0 0;">Off</div>
<svg class="a" style="left:161px;top:15px;" width="17" height="17" viewBox="0 0 17 17" fill="none"><path d="M1 1 H13 L16 4 V16 H1 Z" fill="#e8a6f0" stroke="#b146c2" stroke-width="1.6"/>
      <rect x="4" y="1.5" width="8" height="4.5" fill="#f6e6f8" stroke="#b146c2" stroke-width="1.4"/>
      <rect x="4" y="10" width="9" height="5.5" fill="#f6e6f8" stroke="#b146c2" stroke-width="1.4"/></svg>
<svg class="a" style="left:189px;top:15px;" width="17" height="17" viewBox="0 0 17 17" fill="none"><path d="M2 2 V7 H7" stroke="#242424" stroke-width="1.3"/><path d="M2.5 7 C5 2.5 11 2 13.5 6 C15.5 9.5 13 13 9.5 16.5" stroke="#242424" stroke-width="1.3"/></svg>
<svg class="a" style="left:210px;top:20px;" width="8" height="6" viewBox="0 0 8 6" fill="none"><path d="M1 1.5 L4 4.5 L7 1.5" stroke="#242424" stroke-width="1.2"/></svg>
<svg class="a" style="left:229px;top:15px;" width="17" height="17" viewBox="0 0 17 17" fill="none"><path d="M15 2 V7 H10" stroke="#a8a8a8" stroke-width="1.3"/><path d="M14.5 7 C12 2.5 6 2 3.5 6 C1.5 9.5 4 13 7.5 16.5" stroke="#a8a8a8" stroke-width="1.3"/></svg>
<svg class="a" style="left:250px;top:20px;" width="8" height="6" viewBox="0 0 8 6" fill="none"><path d="M1 1.5 L4 4.5 L7 1.5" stroke="#c8c8c8" stroke-width="1.2"/></svg>
<svg class="a" style="left:270px;top:19px;" width="11" height="9" viewBox="0 0 11 9" fill="none"><path d="M1 1 H10" stroke="#242424" stroke-width="1.3"/><path d="M2 4 L5.5 7.5 L9 4" stroke="#242424" stroke-width="1.3"/></svg>
<div class="t" style="left:305.00px;top:17.57px;font-size:13.50px;line-height:13.50px;color:#242424;transform:scaleX(0.8371);transform-origin:0 0;">Book1  -  Excel</div>
<div class="a" style="left:785px;top:9px;width:366px;height:30px;background:#fafafa;border:1px solid #dcdcdc;border-bottom-color:#c4c4c4;border-radius:5px;"></div>
<svg class="a" style="left:797px;top:16px;" width="16" height="16" viewBox="0 0 16 16" fill="none"><circle cx="10" cy="6" r="5" stroke="#424242" stroke-width="1.2"/><path d="M6.5 9.5 L1.5 14.5" stroke="#424242" stroke-width="1.3"/></svg>
<div class="t" style="left:826.00px;top:17.57px;font-size:13.50px;line-height:13.50px;color:#616161;transform:scaleX(0.9117);transform-origin:0 0;">Search</div>
<svg class="a" style="left:1740px;top:12px;" width="24" height="25" viewBox="0 0 24 25" fill="none"><defs><clipPath id="av"><circle cx="12" cy="12.5" r="12.2"/></clipPath></defs>
      <g clip-path="url(#av)"><rect width="24" height="25" fill="#eceef5"/>
      <path d="M7 6 C8 1.5 12 1 15 1.5 C19 2.5 21 6 21 10 C21 14 22.5 17 23 21 L17 24 L9 23 C7 20 5.5 16 6 11 Z" fill="#b29c7c"/>
      <ellipse cx="14.2" cy="10.5" rx="3.8" ry="4.9" fill="#e7c4aa"/>
      <path d="M9 15.5 L10 13 M19 14 L20 18" stroke="#7d6648" stroke-width="1.2"/>
      <path d="M1.5 25 C3 21 6 18.5 10 18.5 L14.5 25 L18.5 18.5 C21 18.5 23 20 24 22 V25 Z" fill="#1a1b29"/>
      <path d="M11.5 17 H17 L14.5 23 Z" fill="#ecd0ba"/></g></svg>
<div class="a" style="left:1795px;top:23px;width:10px;height:1.2px;background:#242424;"></div>
<svg class="a" style="left:1842px;top:18px;" width="12" height="12" viewBox="0 0 12 12" fill="none"><rect x="1" y="3" width="8" height="8" rx="1.5" stroke="#242424" stroke-width="1.1"/><path d="M3.5 1 H9 A2 2 0 0 1 11 3 V8.5" stroke="#242424" stroke-width="1.1"/></svg>
<svg class="a" style="left:1890px;top:18px;" width="12" height="12" viewBox="0 0 12 12" fill="none"><path d="M1 1 L11 11 M11 1 L1 11" stroke="#242424" stroke-width="1.1"/></svg>
<div class="t" style="left:22.30px;top:56.28px;font-size:14.20px;line-height:14.20px;color:#242424;transform:scaleX(0.8041);transform-origin:0 0;">File</div>
<div class="t" style="left:67.30px;top:56.28px;font-size:14.20px;line-height:14.20px;color:#242424;transform:scaleX(0.9689);transform-origin:0 0;-webkit-text-stroke:.35px #242424;">Home</div>
<div class="t" style="left:124.00px;top:56.28px;font-size:14.20px;line-height:14.20px;color:#242424;transform:scaleX(0.8926);transform-origin:0 0;">Insert</div>
<div class="t" style="left:177.00px;top:56.28px;font-size:14.20px;line-height:14.20px;color:#242424;transform:scaleX(0.9053);transform-origin:0 0;">Draw</div>
<div class="t" style="left:229.00px;top:56.28px;font-size:14.20px;line-height:14.20px;color:#242424;transform:scaleX(0.8903);transform-origin:0 0;">Page Layout</div>
<div class="t" style="left:322.00px;top:56.28px;font-size:14.20px;line-height:14.20px;color:#242424;transform:scaleX(0.8905);transform-origin:0 0;">Formulas</div>
<div class="t" style="left:396.00px;top:56.28px;font-size:14.20px;line-height:14.20px;color:#242424;transform:scaleX(0.8901);transform-origin:0 0;">Data</div>
<div class="t" style="left:444.00px;top:56.28px;font-size:14.20px;line-height:14.20px;color:#242424;transform:scaleX(0.8591);transform-origin:0 0;">Review</div>
<div class="t" style="left:504.00px;top:56.28px;font-size:14.20px;line-height:14.20px;color:#242424;transform:scaleX(0.8846);transform-origin:0 0;">View</div>
<div class="t" style="left:553.00px;top:56.28px;font-size:14.20px;line-height:14.20px;color:#242424;transform:scaleX(0.9164);transform-origin:0 0;">Automate</div>
<div class="t" style="left:631.00px;top:56.28px;font-size:14.20px;line-height:14.20px;color:#242424;transform:scaleX(0.9223);transform-origin:0 0;">Developer</div>
<div class="t" style="left:711.00px;top:56.28px;font-size:14.20px;line-height:14.20px;color:#242424;transform:scaleX(0.8646);transform-origin:0 0;">MACRO</div>
<div class="t" style="left:777.00px;top:56.28px;font-size:14.20px;line-height:14.20px;color:#242424;transform:scaleX(0.9142);transform-origin:0 0;">Help</div>
<div class="t" style="left:825.00px;top:56.28px;font-size:14.20px;line-height:14.20px;color:#242424;transform:scaleX(0.9399);transform-origin:0 0;">Acrobat</div>
<div class="t" style="left:893.30px;top:56.28px;font-size:14.20px;line-height:14.20px;color:#0e7a3a;transform:scaleX(0.8850);transform-origin:0 0;">Spreadsheet Sync</div>
<div class="a" style="left:67px;top:72px;width:38px;height:3px;background:#107c41;border-radius:1.5px;"></div>
<div class="a" style="left:1739px;top:51px;width:90px;height:24px;background:#fff;border:1px solid #8a8a8a;border-radius:4px;"></div>
<svg class="a" style="left:1744px;top:57px;" width="12" height="12" viewBox="0 0 12 12" fill="none"><path d="M1 1 H11 V8 H5 L2.5 10.5 V8 H1 Z" stroke="#242424" stroke-width="1.1" stroke-linejoin="round"/></svg>
<div class="t" style="left:1760.60px;top:56.27px;font-size:13.50px;line-height:13.50px;color:#242424;transform:scaleX(0.9346);transform-origin:0 0;">Comments</div>
<div class="a" style="left:1837px;top:51px;width:71px;height:24px;background:#107c41;border-radius:4px;"></div>
<svg class="a" style="left:1841px;top:56px;" width="13" height="13" viewBox="0 0 13 13" fill="none"><path d="M1.5 5.5 V11.5 H11.5 V8.5" stroke="#fff" stroke-width="1.1"/><path d="M4 9 C4.5 5.5 7 4 10 4 V1.5 L12.5 4.5 L10 7.5 V5.5 C7.5 5.5 5.5 6.5 4 9 Z" stroke="#fff" stroke-width="1" stroke-linejoin="round"/></svg>
<div class="t" style="left:1858.50px;top:56.27px;font-size:13.50px;line-height:13.50px;color:#ffffff;transform:scaleX(0.8882);transform-origin:0 0;">Share</div>
<svg class="a" style="left:1897px;top:60px;" width="7" height="5" viewBox="0 0 7 5" fill="none"><path d="M.8 .8 L3.5 3.8 L6.2 .8" stroke="#fff" stroke-width="1.1"/></svg>
<div class="a" style="left:9px;top:186px;width:101px;height:26px;background:#fff;border:1px solid #d1d1d1;border-radius:4px;"></div>
<div class="t" style="left:15.50px;top:192.57px;font-size:13.50px;line-height:13.50px;color:#242424;transform:scaleX(0.9014);transform-origin:0 0;">O36</div>
<svg class="a" style="left:93px;top:195px;" width="12" height="8" viewBox="0 0 12 8" fill="none"><path d="M1 1.5 L6 6.5 L11 1.5" stroke="#242424" stroke-width="1.2"/></svg>
<div class="a" style="left:118.5px;top:192px;width:2.2px;height:2.2px;background:#424242;border-radius:50%;"></div>
<div class="a" style="left:118.5px;top:197.5px;width:2.2px;height:2.2px;background:#424242;border-radius:50%;"></div>
<div class="a" style="left:118.5px;top:203px;width:2.2px;height:2.2px;background:#424242;border-radius:50%;"></div>
<div class="a" style="left:131px;top:186px;width:85px;height:26px;background:#fff;border:1px solid #d1d1d1;border-radius:4px;"></div>
<svg class="a" style="left:137px;top:193px;" width="12" height="12" viewBox="0 0 12 12" fill="none"><path d="M1 1 L11 11 M11 1 L1 11" stroke="#b0b0b0" stroke-width="1.1"/></svg>
<svg class="a" style="left:159px;top:193px;" width="17" height="12" viewBox="0 0 17 12" fill="none"><path d="M1 6 L5.5 10.5 L16 1" stroke="#b0b0b0" stroke-width="1.1"/></svg>
<div class="t" style="left:184px;top:188px;font-family:'Liberation Serif';font-style:italic;font-size:19px;line-height:19px;color:#242424">f<span style="font-size:15px">x</span></div>
<svg class="a" style="left:203px;top:195px;" width="11" height="7" viewBox="0 0 11 7" fill="none"><path d="M1 1 L5.5 5.5 L10 1" stroke="#616161" stroke-width="1.1"/></svg>
<div class="a" style="left:221px;top:186px;width:1690px;height:26px;background:#fff;border:1px solid #d1d1d1;border-radius:4px;"></div>
<svg class="a" style="left:1895px;top:195px;" width="12" height="8" viewBox="0 0 12 8" fill="none"><path d="M1 1.5 L6 6.5 L11 1.5" stroke="#424242" stroke-width="1.2"/></svg>
<svg class="a" style="left:10px;top:223px;" width="13" height="13" viewBox="0 0 13 13" fill="none"><path d="M12.5 .5 V12.5 H.5 Z" fill="#d8d8d8"/></svg>
<div class="a" style="left:126px;top:220px;width:1px;height:18px;background:#d9d9d9;"></div>
<div class="t" style="left:70.67px;top:221.68px;font-size:13.37px;line-height:13.37px;color:#424242;">H</div>
<div class="a" style="left:227px;top:220px;width:1px;height:18px;background:#d9d9d9;"></div>
<div class="t" style="left:174.64px;top:221.68px;font-size:13.37px;line-height:13.37px;color:#424242;">I</div>
<div class="a" style="left:328px;top:220px;width:1px;height:18px;background:#d9d9d9;"></div>
<div class="t" style="left:274.16px;top:221.68px;font-size:13.37px;line-height:13.37px;color:#424242;">J</div>
<div class="a" style="left:464px;top:220px;width:1px;height:18px;background:#d9d9d9;"></div>
<div class="t" style="left:391.54px;top:221.68px;font-size:13.37px;line-height:13.37px;color:#424242;">K</div>
<div class="a" style="left:565px;top:220px;width:1px;height:18px;background:#d9d9d9;"></div>
<div class="t" style="left:510.78px;top:221.68px;font-size:13.37px;line-height:13.37px;color:#424242;">L</div>
<div class="a" style="left:663px;top:220px;width:1px;height:18px;background:#d9d9d9;"></div>
<div class="t" style="left:608.43px;top:221.68px;font-size:13.37px;line-height:13.37px;color:#424242;">M</div>
<div class="a" style="left:762px;top:220px;width:1px;height:18px;background:#d9d9d9;"></div>
<div class="t" style="left:707.67px;top:221.68px;font-size:13.37px;line-height:13.37px;color:#424242;">N</div>
<div class="a" style="left:762px;top:220px;width:99px;height:18px;background:#e1e1e1;"></div>
<div class="a" style="left:762px;top:236px;width:99px;height:2px;background:#107c41;"></div>
<div class="a" style="left:861px;top:220px;width:1px;height:18px;background:#d9d9d9;"></div>
<div class="t" style="left:806.30px;top:221.68px;font-size:13.37px;line-height:13.37px;color:#107c41;">O</div>
<div class="a" style="left:960px;top:220px;width:1px;height:18px;background:#d9d9d9;"></div>
<div class="t" style="left:906.04px;top:221.68px;font-size:13.37px;line-height:13.37px;color:#424242;">P</div>
<div class="a" style="left:1093px;top:220px;width:1px;height:18px;background:#d9d9d9;"></div>
<div class="t" style="left:1021.30px;top:221.68px;font-size:13.37px;line-height:13.37px;color:#424242;">Q</div>
<div class="a" style="left:1226px;top:220px;width:1px;height:18px;background:#d9d9d9;"></div>
<div class="t" style="left:1154.67px;top:221.68px;font-size:13.37px;line-height:13.37px;color:#424242;">R</div>
<div class="a" style="left:1380px;top:220px;width:1px;height:18px;background:#d9d9d9;"></div>
<div class="t" style="left:1298.54px;top:221.68px;font-size:13.37px;line-height:13.37px;color:#424242;">S</div>
<div class="a" style="left:24px;top:220px;width:1px;height:18px;background:#dadada;"></div>
<div class="a" style="left:24px;top:238px;width:1px;height:740px;background:#9e9e9e;"></div>
<div class="a" style="left:25px;top:238px;width:1355px;height:1px;background:#9e9e9e;"></div>
<div class="a" style="left:25px;top:239px;width:1523px;height:739px;background:#f0f0f0;"></div>
<div class="a" style="left:25px;top:239px;width:1355px;height:739px;background:#ffffff;"></div>
<div class="a" style="left:0px;top:272.5px;width:24px;height:1px;background:linear-gradient(90deg,rgba(220,220,220,0),#d9d9d9);"></div>
<div class="t" style="left:8.98px;top:258.18px;font-size:13.37px;line-height:13.37px;color:#424242;">5</div>
<div class="a" style="left:0px;top:319px;width:24px;height:1px;background:linear-gradient(90deg,rgba(220,220,220,0),#d9d9d9);"></div>
<div class="t" style="left:8.98px;top:304.68px;font-size:13.37px;line-height:13.37px;color:#424242;">6</div>
<div class="a" style="left:0px;top:334px;width:24px;height:1px;background:linear-gradient(90deg,rgba(220,220,220,0),#d9d9d9);"></div>
<div class="t" style="left:8.98px;top:319.68px;font-size:13.37px;line-height:13.37px;color:#424242;">8</div>
<div class="a" style="left:0px;top:361px;width:24px;height:1px;background:linear-gradient(90deg,rgba(220,220,220,0),#d9d9d9);"></div>
<div class="t" style="left:5.26px;top:346.68px;font-size:13.37px;line-height:13.37px;color:#424242;">18</div>
<div class="a" style="left:0px;top:388px;width:24px;height:1px;background:linear-gradient(90deg,rgba(220,220,220,0),#d9d9d9);"></div>
<div class="t" style="left:5.26px;top:373.68px;font-size:13.37px;line-height:13.37px;color:#424242;">19</div>
<div class="a" style="left:0px;top:415px;width:24px;height:1px;background:linear-gradient(90deg,rgba(220,220,220,0),#d9d9d9);"></div>
<div class="t" style="left:5.26px;top:400.68px;font-size:13.37px;line-height:13.37px;color:#424242;">20</div>
<div class="a" style="left:0px;top:442px;width:24px;height:1px;background:linear-gradient(90deg,rgba(220,220,220,0),#d9d9d9);"></div>
<div class="t" style="left:5.26px;top:427.68px;font-size:13.37px;line-height:13.37px;color:#424242;">21</div>
<div class="a" style="left:0px;top:469px;width:24px;height:1px;background:linear-gradient(90deg,rgba(220,220,220,0),#d9d9d9);"></div>
<div class="t" style="left:5.26px;top:454.68px;font-size:13.37px;line-height:13.37px;color:#424242;">22</div>
<div class="a" style="left:0px;top:496px;width:24px;height:1px;background:linear-gradient(90deg,rgba(220,220,220,0),#d9d9d9);"></div>
<div class="t" style="left:5.26px;top:481.68px;font-size:13.37px;line-height:13.37px;color:#424242;">23</div>
<div class="a" style="left:0px;top:523px;width:24px;height:1px;background:linear-gradient(90deg,rgba(220,220,220,0),#d9d9d9);"></div>
<div class="t" style="left:5.26px;top:508.68px;font-size:13.37px;line-height:13.37px;color:#424242;">24</div>
<div class="a" style="left:0px;top:550px;width:24px;height:1px;background:linear-gradient(90deg,rgba(220,220,220,0),#d9d9d9);"></div>
<div class="t" style="left:5.26px;top:535.68px;font-size:13.37px;line-height:13.37px;color:#424242;">25</div>
<div class="a" style="left:0px;top:577px;width:24px;height:1px;background:linear-gradient(90deg,rgba(220,220,220,0),#d9d9d9);"></div>
<div class="t" style="left:5.26px;top:562.68px;font-size:13.37px;line-height:13.37px;color:#424242;">26</div>
<div class="a" style="left:0px;top:604px;width:24px;height:1px;background:linear-gradient(90deg,rgba(220,220,220,0),#d9d9d9);"></div>
<div class="t" style="left:5.26px;top:589.68px;font-size:13.37px;line-height:13.37px;color:#424242;">27</div>
<div class="a" style="left:0px;top:631px;width:24px;height:1px;background:linear-gradient(90deg,rgba(220,220,220,0),#d9d9d9);"></div>
<div class="t" style="left:5.26px;top:616.68px;font-size:13.37px;line-height:13.37px;color:#424242;">28</div>
<div class="a" style="left:0px;top:658px;width:24px;height:1px;background:linear-gradient(90deg,rgba(220,220,220,0),#d9d9d9);"></div>
<div class="t" style="left:5.26px;top:643.68px;font-size:13.37px;line-height:13.37px;color:#424242;">29</div>
<div class="a" style="left:0px;top:685px;width:24px;height:1px;background:linear-gradient(90deg,rgba(220,220,220,0),#d9d9d9);"></div>
<div class="t" style="left:5.26px;top:670.68px;font-size:13.37px;line-height:13.37px;color:#424242;">30</div>
<div class="a" style="left:0px;top:712px;width:24px;height:1px;background:linear-gradient(90deg,rgba(220,220,220,0),#d9d9d9);"></div>
<div class="t" style="left:5.26px;top:697.68px;font-size:13.37px;line-height:13.37px;color:#424242;">31</div>
<div class="a" style="left:0px;top:739px;width:24px;height:1px;background:linear-gradient(90deg,rgba(220,220,220,0),#d9d9d9);"></div>
<div class="t" style="left:5.26px;top:724.68px;font-size:13.37px;line-height:13.37px;color:#424242;">32</div>
<div class="a" style="left:0px;top:766px;width:24px;height:1px;background:linear-gradient(90deg,rgba(220,220,220,0),#d9d9d9);"></div>
<div class="t" style="left:5.26px;top:751.68px;font-size:13.37px;line-height:13.37px;color:#424242;">33</div>
<div class="a" style="left:0px;top:793px;width:24px;height:1px;background:linear-gradient(90deg,rgba(220,220,220,0),#d9d9d9);"></div>
<div class="t" style="left:5.26px;top:778.68px;font-size:13.37px;line-height:13.37px;color:#424242;">34</div>
<div class="a" style="left:0px;top:820px;width:24px;height:1px;background:linear-gradient(90deg,rgba(220,220,220,0),#d9d9d9);"></div>
<div class="t" style="left:5.26px;top:805.68px;font-size:13.37px;line-height:13.37px;color:#424242;">35</div>
<div class="a" style="left:0px;top:847px;width:24px;height:1px;background:linear-gradient(90deg,rgba(220,220,220,0),#d9d9d9);"></div>
<div class="t" style="left:5.26px;top:832.68px;font-size:13.37px;line-height:13.37px;color:#424242;">36</div>
<div class="a" style="left:0px;top:874px;width:24px;height:1px;background:linear-gradient(90deg,rgba(220,220,220,0),#d9d9d9);"></div>
<div class="t" style="left:5.26px;top:859.68px;font-size:13.37px;line-height:13.37px;color:#424242;">37</div>
<div class="a" style="left:0px;top:901px;width:24px;height:1px;background:linear-gradient(90deg,rgba(220,220,220,0),#d9d9d9);"></div>
<div class="t" style="left:5.26px;top:886.68px;font-size:13.37px;line-height:13.37px;color:#424242;">38</div>
<div class="a" style="left:0px;top:902px;width:24px;height:27px;background:#e1e1e1;"></div>
<div class="a" style="left:24px;top:902px;width:2px;height:27px;background:#107c41;"></div>
<div class="a" style="left:0px;top:928px;width:24px;height:1px;background:linear-gradient(90deg,rgba(220,220,220,0),#d9d9d9);"></div>
<div class="t" style="left:5.26px;top:913.68px;font-size:13.37px;line-height:13.37px;color:#107c41;">39</div>
<div class="a" style="left:0px;top:955px;width:24px;height:1px;background:linear-gradient(90deg,rgba(220,220,220,0),#d9d9d9);"></div>
<div class="t" style="left:5.26px;top:940.68px;font-size:13.37px;line-height:13.37px;color:#424242;">40</div>
<div class="a" style="left:0px;top:982px;width:24px;height:1px;background:linear-gradient(90deg,rgba(220,220,220,0),#d9d9d9);"></div>
<div class="t" style="left:5.26px;top:967.68px;font-size:13.37px;line-height:13.37px;color:#424242;">41</div>
<div class="a" style="left:1093px;top:239px;width:1px;height:35px;background:#e1e1e1;"></div>
<div class="a" style="left:25px;top:274px;width:1201px;height:46px;background:#1c963c;"></div>
<div class="a" style="left:25px;top:273px;width:935px;height:1.3px;background:#1a9fe0;"></div>
<div class="a" style="left:126px;top:274px;width:1px;height:46px;background:#ffffff;"></div>
<div class="a" style="left:227px;top:274px;width:1px;height:46px;background:#ffffff;"></div>
<div class="a" style="left:328px;top:274px;width:1px;height:46px;background:#ffffff;"></div>
<div class="a" style="left:464px;top:274px;width:1px;height:46px;background:#ffffff;"></div>
<div class="a" style="left:565px;top:274px;width:1px;height:46px;background:#ffffff;"></div>
<div class="a" style="left:663px;top:274px;width:1px;height:46px;background:#ffffff;"></div>
<div class="a" style="left:762px;top:274px;width:1px;height:46px;background:#ffffff;"></div>
<div class="a" style="left:861px;top:274px;width:1px;height:46px;background:#ffffff;"></div>
<div class="a" style="left:960px;top:274px;width:1px;height:46px;background:#ffffff;"></div>
<div class="a" style="left:1093px;top:274px;width:1px;height:46px;background:#ffffff;"></div>
<div class="a" style="left:1226px;top:274px;width:154px;height:46px;background:#d9d9d9;"></div>
<div class="a" style="left:1226px;top:273px;width:154px;height:1px;background:repeating-linear-gradient(90deg,#6a6a6a 0 3px,transparent 3px 5px);"></div>
<div class="a" style="left:1226px;top:320px;width:154px;height:1px;background:repeating-linear-gradient(90deg,#6a6a6a 0 3px,transparent 3px 5px);"></div>
<div class="t" style="left:49.00px;top:282.02px;font-size:12.50px;line-height:12.50px;color:#ffffff;font-weight:bold;transform:scaleX(0.8975);transform-origin:0 0;">Employee</div>
<div class="t" style="left:37.50px;top:299.82px;font-size:12.50px;line-height:12.50px;color:#ffffff;transform:scaleX(0.9272);transform-origin:0 0;">Select from list</div>
<div class="t" style="left:155.00px;top:282.02px;font-size:12.50px;line-height:12.50px;color:#ffffff;font-weight:bold;transform:scaleX(0.8256);transform-origin:0 0;">Location</div>
<div class="t" style="left:138.50px;top:299.82px;font-size:12.50px;line-height:12.50px;color:#ffffff;transform:scaleX(0.9272);transform-origin:0 0;">Select from list</div>
<div class="t" style="left:266.00px;top:282.02px;font-size:12.50px;line-height:12.50px;color:#ffffff;font-weight:bold;transform:scaleX(0.6895);transform-origin:0 0;">Class</div>
<div class="t" style="left:239.50px;top:299.82px;font-size:12.50px;line-height:12.50px;color:#ffffff;transform:scaleX(0.9272);transform-origin:0 0;">Select from list</div>
<div class="t" style="left:372.00px;top:282.02px;font-size:12.50px;line-height:12.50px;color:#ffffff;font-weight:bold;transform:scaleX(0.9379);transform-origin:0 0;">Tax Rate</div>
<div class="t" style="left:358.00px;top:299.82px;font-size:12.50px;line-height:12.50px;color:#ffffff;transform:scaleX(0.9272);transform-origin:0 0;">Select from list</div>
<div class="t" style="left:474.50px;top:282.02px;font-size:12.50px;line-height:12.50px;color:#ffffff;font-weight:bold;transform:scaleX(0.8726);transform-origin:0 0;">Tax Application</div>
<div class="t" style="left:506.00px;top:299.82px;font-size:12.50px;line-height:12.50px;color:#ffffff;font-weight:bold;transform:scaleX(0.9067);transform-origin:0 0;">ON</div>
<div class="t" style="left:591.00px;top:282.02px;font-size:12.50px;line-height:12.50px;color:#ffffff;font-weight:bold;transform:scaleX(0.8381);transform-origin:0 0;">Currency</div>
<div class="t" style="left:576.00px;top:299.82px;font-size:12.50px;line-height:12.50px;color:#ffffff;transform:scaleX(0.9272);transform-origin:0 0;">Select from list</div>
<div class="t" style="left:699.00px;top:282.02px;font-size:12.50px;line-height:12.50px;color:#ffffff;font-weight:bold;transform:scaleX(0.8640);transform-origin:0 0;">Debit</div>
<div class="t" style="left:688.50px;top:299.82px;font-size:12.50px;line-height:12.50px;color:#ffffff;transform:scaleX(0.8897);transform-origin:0 0;">(exc. Tax)</div>
<div class="t" style="left:796.00px;top:282.02px;font-size:12.50px;line-height:12.50px;color:#ffffff;font-weight:bold;transform:scaleX(0.8584);transform-origin:0 0;">Credit</div>
<div class="t" style="left:787.50px;top:299.82px;font-size:12.50px;line-height:12.50px;color:#ffffff;transform:scaleX(0.8897);transform-origin:0 0;">(exc. Tax)</div>
<div class="t" style="left:879.50px;top:291.02px;font-size:12.50px;line-height:12.50px;color:#ffffff;font-weight:bold;transform:scaleX(0.9018);transform-origin:0 0;">Adjustment</div>
<div class="t" style="left:992.20px;top:290.79px;font-size:13.95px;line-height:13.95px;color:#ffffff;font-weight:bold;transform:scaleX(0.9400);transform-origin:0 0;">Claim Type</div>
<div class="t" style="left:1120.00px;top:290.79px;font-size:13.95px;line-height:13.95px;color:#ffffff;font-weight:bold;transform:scaleX(0.9287);transform-origin:0 0;">Service Type</div>
<div class="t" style="left:1273.50px;top:281.30px;font-size:12.65px;line-height:12.65px;color:#242424;transform:scaleX(0.8625);transform-origin:0 0;">QBO Edit ID</div>
<div class="t" style="left:1240.50px;top:299.60px;font-size:12.65px;line-height:12.65px;color:#8c8c8c;transform:scaleX(0.9193);transform-origin:0 0;">(do not modify or delete)</div>
<svg class="a" style="left:665px;top:276px;" width="9" height="9" viewBox="0 0 9 9" fill="none"><path d="M4.5 .3 L5.6 3.3 L8.8 3.4 L6.3 5.4 L7.2 8.6 L4.5 6.8 L1.8 8.6 L2.7 5.4 L.2 3.4 L3.4 3.3 Z" fill="#fff"/></svg>
<svg class="a" style="left:764px;top:276px;" width="9" height="9" viewBox="0 0 9 9" fill="none"><path d="M4.5 .3 L5.6 3.3 L8.8 3.4 L6.3 5.4 L7.2 8.6 L4.5 6.8 L1.8 8.6 L2.7 5.4 L.2 3.4 L3.4 3.3 Z" fill="#fff"/></svg>
<div class="a" style="left:25px;top:320px;width:101px;height:15px;background:#d9d9d9;"></div>
<div class="a" style="left:126px;top:320px;width:101px;height:15px;background:#d9d9d9;"></div>
<div class="a" style="left:227px;top:320px;width:101px;height:15px;background:#d9d9d9;"></div>
<div class="a" style="left:328px;top:320px;width:136px;height:15px;background:#d9d9d9;"></div>
<div class="a" style="left:464px;top:320px;width:101px;height:15px;background:#d9d9d9;"></div>
<div class="a" style="left:565px;top:320px;width:98px;height:15px;background:#d9d9d9;"></div>
<div class="a" style="left:663px;top:320px;width:99px;height:15px;background:#d9d9d9;"></div>
<div class="a" style="left:762px;top:320px;width:99px;height:15px;background:#d9d9d9;"></div>
<div class="a" style="left:861px;top:320px;width:99px;height:15px;background:#d9d9d9;"></div>
<div class="a" style="left:960px;top:320px;width:133px;height:15px;background:#ffffff;"></div>
<div class="a" style="left:1093px;top:320px;width:133px;height:15px;background:#ffffff;"></div>
<div class="a" style="left:1226px;top:320px;width:154px;height:15px;background:#d9d9d9;"></div>
<div class="a" style="left:25px;top:320px;width:935px;height:1px;background:repeating-linear-gradient(90deg,#5a5a5a 0 3px,#ffffff 3px 4px);"></div>
<div class="a" style="left:125.5px;top:320px;width:1px;height:15px;background:repeating-linear-gradient(180deg,#5a5a5a 0 3px,#fff 3px 4px);"></div>
<div class="a" style="left:226.5px;top:320px;width:1px;height:15px;background:repeating-linear-gradient(180deg,#5a5a5a 0 3px,#fff 3px 4px);"></div>
<div class="a" style="left:327.5px;top:320px;width:1px;height:15px;background:repeating-linear-gradient(180deg,#5a5a5a 0 3px,#fff 3px 4px);"></div>
<div class="a" style="left:463.5px;top:320px;width:1px;height:15px;background:repeating-linear-gradient(180deg,#5a5a5a 0 3px,#fff 3px 4px);"></div>
<div class="a" style="left:564.5px;top:320px;width:1px;height:15px;background:repeating-linear-gradient(180deg,#5a5a5a 0 3px,#fff 3px 4px);"></div>
<div class="a" style="left:662.5px;top:320px;width:1px;height:15px;background:repeating-linear-gradient(180deg,#5a5a5a 0 3px,#fff 3px 4px);"></div>
<div class="a" style="left:761.5px;top:320px;width:1px;height:15px;background:repeating-linear-gradient(180deg,#5a5a5a 0 3px,#fff 3px 4px);"></div>
<div class="a" style="left:860.5px;top:320px;width:1px;height:15px;background:repeating-linear-gradient(180deg,#5a5a5a 0 3px,#fff 3px 4px);"></div>
<div class="a" style="left:959.5px;top:320px;width:1px;height:15px;background:repeating-linear-gradient(180deg,#5a5a5a 0 3px,#fff 3px 4px);"></div>
<div class="a" style="left:1226px;top:320px;width:1px;height:15px;background:repeating-linear-gradient(180deg,#555 0 2px,transparent 2px 4px);"></div>
<div class="a" style="left:1093px;top:320px;width:1px;height:15px;background:#e1e1e1;"></div>
<div class="a" style="left:111px;top:320.5px;width:14.5px;height:14.5px;background:linear-gradient(#ffffff,#eef1f5);border:1px solid #a2a8b4;"></div>
<svg class="a" style="left:115.7px;top:326px;" width="6" height="5" viewBox="0 0 6 5" fill="none"><path d="M0 .3 H5 L2.5 3.8 Z" fill="#555"/></svg>
<div class="a" style="left:212px;top:320.5px;width:14.5px;height:14.5px;background:linear-gradient(#ffffff,#eef1f5);border:1px solid #a2a8b4;"></div>
<svg class="a" style="left:216.7px;top:326px;" width="6" height="5" viewBox="0 0 6 5" fill="none"><path d="M0 .3 H5 L2.5 3.8 Z" fill="#555"/></svg>
<div class="a" style="left:313px;top:320.5px;width:14.5px;height:14.5px;background:linear-gradient(#ffffff,#eef1f5);border:1px solid #a2a8b4;"></div>
<svg class="a" style="left:317.7px;top:326px;" width="6" height="5" viewBox="0 0 6 5" fill="none"><path d="M0 .3 H5 L2.5 3.8 Z" fill="#555"/></svg>
<div class="a" style="left:449px;top:320.5px;width:14.5px;height:14.5px;background:linear-gradient(#ffffff,#eef1f5);border:1px solid #a2a8b4;"></div>
<svg class="a" style="left:453.7px;top:326px;" width="6" height="5" viewBox="0 0 6 5" fill="none"><path d="M0 .3 H5 L2.5 3.8 Z" fill="#555"/></svg>
<div class="a" style="left:550px;top:320.5px;width:14.5px;height:14.5px;background:linear-gradient(#ffffff,#eef1f5);border:1px solid #a2a8b4;"></div>
<svg class="a" style="left:554.7px;top:326px;" width="6" height="5" viewBox="0 0 6 5" fill="none"><path d="M0 .3 H5 L2.5 3.8 Z" fill="#555"/></svg>
<div class="a" style="left:648px;top:320.5px;width:14.5px;height:14.5px;background:linear-gradient(#ffffff,#eef1f5);border:1px solid #a2a8b4;"></div>
<svg class="a" style="left:652.7px;top:326px;" width="6" height="5" viewBox="0 0 6 5" fill="none"><path d="M0 .3 H5 L2.5 3.8 Z" fill="#555"/></svg>
<div class="a" style="left:747px;top:320.5px;width:14.5px;height:14.5px;background:linear-gradient(#ffffff,#eef1f5);border:1px solid #a2a8b4;"></div>
<svg class="a" style="left:751.7px;top:326px;" width="6" height="5" viewBox="0 0 6 5" fill="none"><path d="M0 .3 H5 L2.5 3.8 Z" fill="#555"/></svg>
<div class="a" style="left:846px;top:320.5px;width:14.5px;height:14.5px;background:linear-gradient(#ffffff,#eef1f5);border:1px solid #a2a8b4;"></div>
<svg class="a" style="left:850.7px;top:326px;" width="6" height="5" viewBox="0 0 6 5" fill="none"><path d="M0 .3 H5 L2.5 3.8 Z" fill="#555"/></svg>
<div class="a" style="left:945px;top:320.5px;width:14.5px;height:14.5px;background:linear-gradient(#ffffff,#eef1f5);border:1px solid #a2a8b4;"></div>
<svg class="a" style="left:949.7px;top:326px;" width="6" height="5" viewBox="0 0 6 5" fill="none"><path d="M0 .3 H5 L2.5 3.8 Z" fill="#555"/></svg>
<div class="a" style="left:1078px;top:320.5px;width:14.5px;height:14.5px;background:linear-gradient(#ffffff,#eef1f5);border:1px solid #a2a8b4;"></div>
<svg class="a" style="left:1082.7px;top:326px;" width="6" height="5" viewBox="0 0 6 5" fill="none"><path d="M0 .3 H5 L2.5 3.8 Z" fill="#555"/></svg>
<div class="a" style="left:1211px;top:320.5px;width:14.5px;height:14.5px;background:linear-gradient(#ffffff,#eef1f5);border:1px solid #a2a8b4;"></div>
<svg class="a" style="left:1215.7px;top:326px;" width="6" height="5" viewBox="0 0 6 5" fill="none"><path d="M0 .3 H5 L2.5 3.8 Z" fill="#555"/></svg>
<div class="a" style="left:1365px;top:320.5px;width:14.5px;height:14.5px;background:linear-gradient(#ffffff,#eef1f5);border:1px solid #a2a8b4;"></div>
<svg class="a" style="left:1369.7px;top:326px;" width="6" height="5" viewBox="0 0 6 5" fill="none"><path d="M0 .3 H5 L2.5 3.8 Z" fill="#555"/></svg>
<div class="a" style="left:25px;top:335px;width:1523px;height:1px;background:#9a9a9a;"></div>
<div class="a" style="left:126px;top:336px;width:1px;height:642px;background:#e1e1e1;"></div>
<div class="a" style="left:227px;top:336px;width:1px;height:642px;background:#e1e1e1;"></div>
<div class="a" style="left:328px;top:336px;width:1px;height:642px;background:#e1e1e1;"></div>
<div class="a" style="left:464px;top:336px;width:1px;height:642px;background:#e1e1e1;"></div>
<div class="a" style="left:565px;top:336px;width:1px;height:642px;background:#e1e1e1;"></div>
<div class="a" style="left:663px;top:336px;width:1px;height:642px;background:#e1e1e1;"></div>
<div class="a" style="left:762px;top:336px;width:1px;height:642px;background:#e1e1e1;"></div>
<div class="a" style="left:861px;top:336px;width:1px;height:642px;background:#e1e1e1;"></div>
<div class="a" style="left:960px;top:336px;width:1px;height:642px;background:#e1e1e1;"></div>
<div class="a" style="left:1093px;top:336px;width:1px;height:642px;background:#e1e1e1;"></div>
<div class="a" style="left:1226px;top:336px;width:1px;height:642px;background:#e1e1e1;"></div>
<div class="a" style="left:1226px;top:336px;width:154px;height:642px;background:#d9d9d9;"></div>
<div class="a" style="left:1226px;top:336px;width:1px;height:642px;background:repeating-linear-gradient(180deg,#6a6a6a 0 3px,transparent 3px 5px);"></div>
<div class="a" style="left:25px;top:362px;width:1201px;height:1px;background:#e1e1e1;"></div>
<div class="a" style="left:1227px;top:362px;width:153px;height:1px;background:repeating-linear-gradient(90deg,#6a6a6a 0 3px,transparent 3px 5px);"></div>
<div class="a" style="left:25px;top:389px;width:1201px;height:1px;background:#e1e1e1;"></div>
<div class="a" style="left:1227px;top:389px;width:153px;height:1px;background:repeating-linear-gradient(90deg,#6a6a6a 0 3px,transparent 3px 5px);"></div>
<div class="a" style="left:25px;top:416px;width:1201px;height:1px;background:#e1e1e1;"></div>
<div class="a" style="left:1227px;top:416px;width:153px;height:1px;background:repeating-linear-gradient(90deg,#6a6a6a 0 3px,transparent 3px 5px);"></div>
<div class="a" style="left:25px;top:443px;width:1201px;height:1px;background:#e1e1e1;"></div>
<div class="a" style="left:1227px;top:443px;width:153px;height:1px;background:repeating-linear-gradient(90deg,#6a6a6a 0 3px,transparent 3px 5px);"></div>
<div class="a" style="left:25px;top:470px;width:1201px;height:1px;background:#e1e1e1;"></div>
<div class="a" style="left:1227px;top:470px;width:153px;height:1px;background:repeating-linear-gradient(90deg,#6a6a6a 0 3px,transparent 3px 5px);"></div>
<div class="a" style="left:25px;top:497px;width:1201px;height:1px;background:#e1e1e1;"></div>
<div class="a" style="left:1227px;top:497px;width:153px;height:1px;background:repeating-linear-gradient(90deg,#6a6a6a 0 3px,transparent 3px 5px);"></div>
<div class="a" style="left:25px;top:524px;width:1201px;height:1px;background:#e1e1e1;"></div>
<div class="a" style="left:1227px;top:524px;width:153px;height:1px;background:repeating-linear-gradient(90deg,#6a6a6a 0 3px,transparent 3px 5px);"></div>
<div class="a" style="left:25px;top:551px;width:1201px;height:1px;background:#e1e1e1;"></div>
<div class="a" style="left:1227px;top:551px;width:153px;height:1px;background:repeating-linear-gradient(90deg,#6a6a6a 0 3px,transparent 3px 5px);"></div>
<div class="a" style="left:25px;top:578px;width:1201px;height:1px;background:#e1e1e1;"></div>
<div class="a" style="left:1227px;top:578px;width:153px;height:1px;background:repeating-linear-gradient(90deg,#6a6a6a 0 3px,transparent 3px 5px);"></div>
<div class="a" style="left:25px;top:605px;width:1201px;height:1px;background:#e1e1e1;"></div>
<div class="a" style="left:1227px;top:605px;width:153px;height:1px;background:repeating-linear-gradient(90deg,#6a6a6a 0 3px,transparent 3px 5px);"></div>
<div class="a" style="left:25px;top:632px;width:1201px;height:1px;background:#e1e1e1;"></div>
<div class="a" style="left:1227px;top:632px;width:153px;height:1px;background:repeating-linear-gradient(90deg,#6a6a6a 0 3px,transparent 3px 5px);"></div>
<div class="a" style="left:25px;top:659px;width:1201px;height:1px;background:#e1e1e1;"></div>
<div class="a" style="left:1227px;top:659px;width:153px;height:1px;background:repeating-linear-gradient(90deg,#6a6a6a 0 3px,transparent 3px 5px);"></div>
<div class="a" style="left:25px;top:686px;width:1201px;height:1px;background:#e1e1e1;"></div>
<div class="a" style="left:1227px;top:686px;width:153px;height:1px;background:repeating-linear-gradient(90deg,#6a6a6a 0 3px,transparent 3px 5px);"></div>
<div class="a" style="left:25px;top:713px;width:1201px;height:1px;background:#e1e1e1;"></div>
<div class="a" style="left:1227px;top:713px;width:153px;height:1px;background:repeating-linear-gradient(90deg,#6a6a6a 0 3px,transparent 3px 5px);"></div>
<div class="a" style="left:25px;top:740px;width:1201px;height:1px;background:#e1e1e1;"></div>
<div class="a" style="left:1227px;top:740px;width:153px;height:1px;background:repeating-linear-gradient(90deg,#6a6a6a 0 3px,transparent 3px 5px);"></div>
<div class="a" style="left:25px;top:767px;width:1201px;height:1px;background:#e1e1e1;"></div>
<div class="a" style="left:1227px;top:767px;width:153px;height:1px;background:repeating-linear-gradient(90deg,#6a6a6a 0 3px,transparent 3px 5px);"></div>
<div class="a" style="left:25px;top:794px;width:1201px;height:1px;background:#e1e1e1;"></div>
<div class="a" style="left:1227px;top:794px;width:153px;height:1px;background:repeating-linear-gradient(90deg,#6a6a6a 0 3px,transparent 3px 5px);"></div>
<div class="a" style="left:25px;top:821px;width:1201px;height:1px;background:#e1e1e1;"></div>
<div class="a" style="left:1227px;top:821px;width:153px;height:1px;background:repeating-linear-gradient(90deg,#6a6a6a 0 3px,transparent 3px 5px);"></div>
<div class="a" style="left:25px;top:848px;width:1201px;height:1px;background:#e1e1e1;"></div>
<div class="a" style="left:1227px;top:848px;width:153px;height:1px;background:repeating-linear-gradient(90deg,#6a6a6a 0 3px,transparent 3px 5px);"></div>
<div class="a" style="left:25px;top:875px;width:1201px;height:1px;background:#e1e1e1;"></div>
<div class="a" style="left:1227px;top:875px;width:153px;height:1px;background:repeating-linear-gradient(90deg,#6a6a6a 0 3px,transparent 3px 5px);"></div>
<div class="a" style="left:25px;top:902px;width:1201px;height:1px;background:#e1e1e1;"></div>
<div class="a" style="left:1227px;top:902px;width:153px;height:1px;background:repeating-linear-gradient(90deg,#6a6a6a 0 3px,transparent 3px 5px);"></div>
<div class="a" style="left:25px;top:929px;width:1201px;height:1px;background:#e1e1e1;"></div>
<div class="a" style="left:1227px;top:929px;width:153px;height:1px;background:repeating-linear-gradient(90deg,#6a6a6a 0 3px,transparent 3px 5px);"></div>
<div class="a" style="left:25px;top:956px;width:1201px;height:1px;background:#e1e1e1;"></div>
<div class="a" style="left:1227px;top:956px;width:153px;height:1px;background:repeating-linear-gradient(90deg,#6a6a6a 0 3px,transparent 3px 5px);"></div>
<div class="a" style="left:25px;top:983px;width:1201px;height:1px;background:#e1e1e1;"></div>
<div class="a" style="left:1227px;top:983px;width:153px;height:1px;background:repeating-linear-gradient(90deg,#6a6a6a 0 3px,transparent 3px 5px);"></div>
<div class="t" style="left:568.50px;top:343.17px;font-size:12.79px;line-height:12.79px;color:#000000;transform:scaleX(0.8331);transform-origin:0 0;">USD</div>
<div class="t" style="left:721.66px;top:343.17px;font-size:12.79px;line-height:12.79px;color:#000000;transform:scaleX(0.9799);transform-origin:0 0;">554.33</div>
<div class="t" style="left:963.30px;top:347.19px;font-size:13.95px;line-height:13.95px;color:#000000;transform:scaleX(0.8295);transform-origin:0 0;">CM</div>
<div class="t" style="left:1096.00px;top:347.19px;font-size:13.95px;line-height:13.95px;color:#000000;transform:scaleX(0.9584);transform-origin:0 0;">Case Management</div>
<div class="t" style="left:568.50px;top:370.17px;font-size:12.79px;line-height:12.79px;color:#000000;transform:scaleX(0.8331);transform-origin:0 0;">USD</div>
<div class="t" style="left:728.63px;top:370.17px;font-size:12.79px;line-height:12.79px;color:#000000;transform:scaleX(0.9799);transform-origin:0 0;">87.53</div>
<div class="t" style="left:963.30px;top:374.19px;font-size:13.95px;line-height:13.95px;color:#000000;transform:scaleX(0.8173);transform-origin:0 0;">WC</div>
<div class="t" style="left:1096.00px;top:374.19px;font-size:13.95px;line-height:13.95px;color:#000000;transform:scaleX(0.9379);transform-origin:0 0;">Bill Review</div>
<div class="t" style="left:568.50px;top:397.17px;font-size:12.79px;line-height:12.79px;color:#000000;transform:scaleX(0.8331);transform-origin:0 0;">USD</div>
<div class="t" style="left:728.63px;top:397.17px;font-size:12.79px;line-height:12.79px;color:#000000;transform:scaleX(0.9799);transform-origin:0 0;">87.52</div>
<div class="t" style="left:963.30px;top:401.19px;font-size:13.95px;line-height:13.95px;color:#000000;transform:scaleX(0.8003);transform-origin:0 0;">PIP</div>
<div class="t" style="left:1096.00px;top:401.19px;font-size:13.95px;line-height:13.95px;color:#000000;transform:scaleX(0.9379);transform-origin:0 0;">Bill Review</div>
<div class="t" style="left:568.50px;top:424.17px;font-size:12.79px;line-height:12.79px;color:#000000;transform:scaleX(0.8331);transform-origin:0 0;">USD</div>
<div class="t" style="left:721.66px;top:424.17px;font-size:12.79px;line-height:12.79px;color:#000000;transform:scaleX(0.9799);transform-origin:0 0;">122.61</div>
<div class="t" style="left:963.30px;top:428.19px;font-size:13.95px;line-height:13.95px;color:#000000;transform:scaleX(0.8295);transform-origin:0 0;">CM</div>
<div class="t" style="left:1096.00px;top:428.19px;font-size:13.95px;line-height:13.95px;color:#000000;transform:scaleX(0.9584);transform-origin:0 0;">Case Management</div>
<div class="t" style="left:568.50px;top:451.17px;font-size:12.79px;line-height:12.79px;color:#000000;transform:scaleX(0.8331);transform-origin:0 0;">USD</div>
<div class="t" style="left:728.63px;top:451.17px;font-size:12.79px;line-height:12.79px;color:#000000;transform:scaleX(0.9799);transform-origin:0 0;">19.36</div>
<div class="t" style="left:963.30px;top:455.19px;font-size:13.95px;line-height:13.95px;color:#000000;transform:scaleX(0.8173);transform-origin:0 0;">WC</div>
<div class="t" style="left:1096.00px;top:455.19px;font-size:13.95px;line-height:13.95px;color:#000000;transform:scaleX(0.9379);transform-origin:0 0;">Bill Review</div>
<div class="t" style="left:568.50px;top:478.17px;font-size:12.79px;line-height:12.79px;color:#000000;transform:scaleX(0.8331);transform-origin:0 0;">USD</div>
<div class="t" style="left:728.63px;top:478.17px;font-size:12.79px;line-height:12.79px;color:#000000;transform:scaleX(0.9799);transform-origin:0 0;">19.36</div>
<div class="t" style="left:963.30px;top:482.19px;font-size:13.95px;line-height:13.95px;color:#000000;transform:scaleX(0.8003);transform-origin:0 0;">PIP</div>
<div class="t" style="left:1096.00px;top:482.19px;font-size:13.95px;line-height:13.95px;color:#000000;transform:scaleX(0.9379);transform-origin:0 0;">Bill Review</div>
<div class="t" style="left:568.50px;top:505.17px;font-size:12.79px;line-height:12.79px;color:#000000;transform:scaleX(0.8331);transform-origin:0 0;">USD</div>
<div class="t" style="left:721.66px;top:505.17px;font-size:12.79px;line-height:12.79px;color:#000000;transform:scaleX(0.9799);transform-origin:0 0;">819.48</div>
<div class="t" style="left:963.30px;top:509.19px;font-size:13.95px;line-height:13.95px;color:#000000;transform:scaleX(0.8295);transform-origin:0 0;">CM</div>
<div class="t" style="left:1096.00px;top:509.19px;font-size:13.95px;line-height:13.95px;color:#000000;transform:scaleX(0.9584);transform-origin:0 0;">Case Management</div>
<div class="t" style="left:568.50px;top:532.17px;font-size:12.79px;line-height:12.79px;color:#000000;transform:scaleX(0.8331);transform-origin:0 0;">USD</div>
<div class="t" style="left:721.66px;top:532.17px;font-size:12.79px;line-height:12.79px;color:#000000;transform:scaleX(0.9799);transform-origin:0 0;">129.39</div>
<div class="t" style="left:963.30px;top:536.19px;font-size:13.95px;line-height:13.95px;color:#000000;transform:scaleX(0.8173);transform-origin:0 0;">WC</div>
<div class="t" style="left:1096.00px;top:536.19px;font-size:13.95px;line-height:13.95px;color:#000000;transform:scaleX(0.9379);transform-origin:0 0;">Bill Review</div>
<div class="t" style="left:568.50px;top:559.17px;font-size:12.79px;line-height:12.79px;color:#000000;transform:scaleX(0.8331);transform-origin:0 0;">USD</div>
<div class="t" style="left:721.66px;top:559.17px;font-size:12.79px;line-height:12.79px;color:#000000;transform:scaleX(0.9799);transform-origin:0 0;">129.39</div>
<div class="t" style="left:963.30px;top:563.19px;font-size:13.95px;line-height:13.95px;color:#000000;transform:scaleX(0.8003);transform-origin:0 0;">PIP</div>
<div class="t" style="left:1096.00px;top:563.19px;font-size:13.95px;line-height:13.95px;color:#000000;transform:scaleX(0.9379);transform-origin:0 0;">Bill Review</div>
<div class="t" style="left:568.50px;top:586.17px;font-size:12.79px;line-height:12.79px;color:#000000;transform:scaleX(0.8331);transform-origin:0 0;">USD</div>
<div class="t" style="left:735.60px;top:586.17px;font-size:12.79px;line-height:12.79px;color:#000000;transform:scaleX(0.9799);transform-origin:0 0;">3.80</div>
<div class="t" style="left:963.30px;top:590.19px;font-size:13.95px;line-height:13.95px;color:#000000;transform:scaleX(0.8295);transform-origin:0 0;">CM</div>
<div class="t" style="left:1096.00px;top:590.19px;font-size:13.95px;line-height:13.95px;color:#000000;transform:scaleX(0.9584);transform-origin:0 0;">Case Management</div>
<div class="t" style="left:568.50px;top:613.17px;font-size:12.79px;line-height:12.79px;color:#000000;transform:scaleX(0.8331);transform-origin:0 0;">USD</div>
<div class="t" style="left:735.60px;top:613.17px;font-size:12.79px;line-height:12.79px;color:#000000;transform:scaleX(0.9799);transform-origin:0 0;">0.60</div>
<div class="t" style="left:963.30px;top:617.19px;font-size:13.95px;line-height:13.95px;color:#000000;transform:scaleX(0.8173);transform-origin:0 0;">WC</div>
<div class="t" style="left:1096.00px;top:617.19px;font-size:13.95px;line-height:13.95px;color:#000000;transform:scaleX(0.9379);transform-origin:0 0;">Bill Review</div>
<div class="t" style="left:568.50px;top:640.17px;font-size:12.79px;line-height:12.79px;color:#000000;transform:scaleX(0.8331);transform-origin:0 0;">USD</div>
<div class="t" style="left:735.60px;top:640.17px;font-size:12.79px;line-height:12.79px;color:#000000;transform:scaleX(0.9799);transform-origin:0 0;">0.60</div>
<div class="t" style="left:963.30px;top:644.19px;font-size:13.95px;line-height:13.95px;color:#000000;transform:scaleX(0.8003);transform-origin:0 0;">PIP</div>
<div class="t" style="left:1096.00px;top:644.19px;font-size:13.95px;line-height:13.95px;color:#000000;transform:scaleX(0.9379);transform-origin:0 0;">Bill Review</div>
<div class="t" style="left:568.50px;top:667.17px;font-size:12.79px;line-height:12.79px;color:#000000;transform:scaleX(0.8331);transform-origin:0 0;">USD</div>
<div class="t" style="left:721.66px;top:667.17px;font-size:12.79px;line-height:12.79px;color:#000000;transform:scaleX(0.9799);transform-origin:0 0;">333.55</div>
<div class="t" style="left:963.30px;top:671.19px;font-size:13.95px;line-height:13.95px;color:#000000;transform:scaleX(0.8295);transform-origin:0 0;">CM</div>
<div class="t" style="left:1096.00px;top:671.19px;font-size:13.95px;line-height:13.95px;color:#000000;transform:scaleX(0.9584);transform-origin:0 0;">Case Management</div>
<div class="t" style="left:568.50px;top:694.17px;font-size:12.79px;line-height:12.79px;color:#000000;transform:scaleX(0.8331);transform-origin:0 0;">USD</div>
<div class="t" style="left:728.63px;top:694.17px;font-size:12.79px;line-height:12.79px;color:#000000;transform:scaleX(0.9799);transform-origin:0 0;">52.67</div>
<div class="t" style="left:963.30px;top:698.19px;font-size:13.95px;line-height:13.95px;color:#000000;transform:scaleX(0.8173);transform-origin:0 0;">WC</div>
<div class="t" style="left:1096.00px;top:698.19px;font-size:13.95px;line-height:13.95px;color:#000000;transform:scaleX(0.9379);transform-origin:0 0;">Bill Review</div>
<div class="t" style="left:568.50px;top:721.17px;font-size:12.79px;line-height:12.79px;color:#000000;transform:scaleX(0.8331);transform-origin:0 0;">USD</div>
<div class="t" style="left:728.63px;top:721.17px;font-size:12.79px;line-height:12.79px;color:#000000;transform:scaleX(0.9799);transform-origin:0 0;">52.66</div>
<div class="t" style="left:963.30px;top:725.19px;font-size:13.95px;line-height:13.95px;color:#000000;transform:scaleX(0.8003);transform-origin:0 0;">PIP</div>
<div class="t" style="left:1096.00px;top:725.19px;font-size:13.95px;line-height:13.95px;color:#000000;transform:scaleX(0.9379);transform-origin:0 0;">Bill Review</div>
<div class="t" style="left:568.50px;top:748.17px;font-size:12.79px;line-height:12.79px;color:#000000;transform:scaleX(0.8331);transform-origin:0 0;">USD</div>
<div class="t" style="left:721.66px;top:748.17px;font-size:12.79px;line-height:12.79px;color:#000000;transform:scaleX(0.9799);transform-origin:0 0;">213.56</div>
<div class="t" style="left:963.30px;top:752.19px;font-size:13.95px;line-height:13.95px;color:#000000;transform:scaleX(0.8295);transform-origin:0 0;">CM</div>
<div class="t" style="left:1096.00px;top:752.19px;font-size:13.95px;line-height:13.95px;color:#000000;transform:scaleX(0.9584);transform-origin:0 0;">Case Management</div>
<div class="t" style="left:568.50px;top:775.17px;font-size:12.79px;line-height:12.79px;color:#000000;transform:scaleX(0.8331);transform-origin:0 0;">USD</div>
<div class="t" style="left:728.63px;top:775.17px;font-size:12.79px;line-height:12.79px;color:#000000;transform:scaleX(0.9799);transform-origin:0 0;">33.72</div>
<div class="t" style="left:963.30px;top:779.19px;font-size:13.95px;line-height:13.95px;color:#000000;transform:scaleX(0.8173);transform-origin:0 0;">WC</div>
<div class="t" style="left:1096.00px;top:779.19px;font-size:13.95px;line-height:13.95px;color:#000000;transform:scaleX(0.9379);transform-origin:0 0;">Bill Review</div>
<div class="t" style="left:568.50px;top:802.17px;font-size:12.79px;line-height:12.79px;color:#000000;transform:scaleX(0.8331);transform-origin:0 0;">USD</div>
<div class="t" style="left:728.63px;top:802.17px;font-size:12.79px;line-height:12.79px;color:#000000;transform:scaleX(0.9799);transform-origin:0 0;">33.72</div>
<div class="t" style="left:963.30px;top:806.19px;font-size:13.95px;line-height:13.95px;color:#000000;transform:scaleX(0.8003);transform-origin:0 0;">PIP</div>
<div class="t" style="left:1096.00px;top:806.19px;font-size:13.95px;line-height:13.95px;color:#000000;transform:scaleX(0.9379);transform-origin:0 0;">Bill Review</div>
<div class="t" style="left:568.50px;top:829.17px;font-size:12.79px;line-height:12.79px;color:#000000;transform:scaleX(0.8331);transform-origin:0 0;">USD</div>
<div class="t" style="left:721.66px;top:829.17px;font-size:12.79px;line-height:12.79px;color:#000000;transform:scaleX(0.9799);transform-origin:0 0;">223.44</div>
<div class="t" style="left:963.30px;top:833.19px;font-size:13.95px;line-height:13.95px;color:#000000;transform:scaleX(0.8295);transform-origin:0 0;">CM</div>
<div class="t" style="left:1096.00px;top:833.19px;font-size:13.95px;line-height:13.95px;color:#000000;transform:scaleX(0.9584);transform-origin:0 0;">Case Management</div>
<div class="t" style="left:568.50px;top:856.17px;font-size:12.79px;line-height:12.79px;color:#000000;transform:scaleX(0.8331);transform-origin:0 0;">USD</div>
<div class="t" style="left:728.63px;top:856.17px;font-size:12.79px;line-height:12.79px;color:#000000;transform:scaleX(0.9799);transform-origin:0 0;">35.28</div>
<div class="t" style="left:963.30px;top:860.19px;font-size:13.95px;line-height:13.95px;color:#000000;transform:scaleX(0.8173);transform-origin:0 0;">WC</div>
<div class="t" style="left:1096.00px;top:860.19px;font-size:13.95px;line-height:13.95px;color:#000000;transform:scaleX(0.9379);transform-origin:0 0;">Bill Review</div>
<div class="t" style="left:568.50px;top:883.17px;font-size:12.79px;line-height:12.79px;color:#000000;transform:scaleX(0.8331);transform-origin:0 0;">USD</div>
<div class="t" style="left:728.63px;top:883.17px;font-size:12.79px;line-height:12.79px;color:#000000;transform:scaleX(0.9799);transform-origin:0 0;">35.28</div>
<div class="t" style="left:963.30px;top:887.19px;font-size:13.95px;line-height:13.95px;color:#000000;transform:scaleX(0.8003);transform-origin:0 0;">PIP</div>
<div class="t" style="left:1096.00px;top:887.19px;font-size:13.95px;line-height:13.95px;color:#000000;transform:scaleX(0.9379);transform-origin:0 0;">Bill Review</div>
<div class="t" style="left:568.50px;top:910.17px;font-size:12.79px;line-height:12.79px;color:#000000;transform:scaleX(0.8331);transform-origin:0 0;">USD</div>
<div class="t" style="left:963.30px;top:914.19px;font-size:13.95px;line-height:13.95px;color:#000000;transform:scaleX(0.8003);transform-origin:0 0;">PIP</div>
<div class="t" style="left:1096.00px;top:914.19px;font-size:13.95px;line-height:13.95px;color:#000000;transform:scaleX(0.9379);transform-origin:0 0;">Bill Review</div>
<div class="a" style="left:761px;top:901px;width:102px;height:30px;border:2.5px solid #107c41;"></div>
<div class="a" style="left:763px;top:902.3px;width:98px;height:1.2px;background:repeating-linear-gradient(90deg,transparent 0 3px,#ffffff 3px 5px);"></div>
<div class="a" style="left:763px;top:928.5px;width:98px;height:1.2px;background:repeating-linear-gradient(90deg,transparent 0 3px,#ffffff 3px 5px);"></div>
<div class="a" style="left:762.3px;top:903px;width:1.2px;height:26px;background:repeating-linear-gradient(180deg,transparent 0 3px,#ffffff 3px 5px);"></div>
<div class="a" style="left:860.5px;top:903px;width:1.2px;height:26px;background:repeating-linear-gradient(180deg,transparent 0 3px,#ffffff 3px 5px);"></div>
<div class="a" style="left:859px;top:927px;width:5px;height:5px;background:#107c41;border:1px solid #fff;"></div>
<div class="t" style="left:804.00px;top:909.17px;font-size:12.79px;line-height:12.79px;color:#000000;transform:scaleX(0.9665);transform-origin:0 0;">23,620.15</div>
<div class="a" style="left:865px;top:933px;width:61px;height:23px;background:#fdfdfd;border:1px solid #a8a8a8;"></div>
<svg class="a" style="left:869px;top:936px;" width="16" height="17" viewBox="0 0 16 17" fill="none"><rect x="1" y="3" width="10" height="13" fill="#fff" stroke="#e07a10" stroke-width="1.2"/><path d="M4 3 V1.5 H8 V3" stroke="#616161"/><rect x="6" y="7" width="8.5" height="9.5" fill="#fff" stroke="#242424" stroke-width="1.1"/></svg>
<div class="t" style="left:887.30px;top:938.67px;font-size:12.79px;line-height:12.79px;color:#242424;transform:scaleX(0.9151);transform-origin:0 0;">(Ctrl)</div>
<svg class="a" style="left:916px;top:942px;" width="6" height="4" viewBox="0 0 6 4" fill="none"><path d="M0 0 H6 L3 3.5 Z" fill="#424242"/></svg>
<div class="a" style="left:1548px;top:239px;width:1px;height:739px;background:#dedede;"></div>
<div class="a" style="left:1380px;top:977.5px;width:168px;height:1px;background:#dedede;"></div>
<div class="a" style="left:1549px;top:220px;width:21px;height:790px;background:#f0f0f0;"></div>
<div class="a" style="left:1551px;top:221px;width:17px;height:756px;background:#f6f6f6;border-radius:8px;"></div>
<svg class="a" style="left:1554px;top:223px;" width="10" height="8" viewBox="0 0 10 8" fill="none"><path d="M1 7 L5 1.5 L9 7 Z" fill="#666"/></svg>
<div class="a" style="left:1555px;top:236px;width:9px;height:17px;background:#6e6e6e;border-radius:4.5px;"></div>
<svg class="a" style="left:1554px;top:967px;" width="10" height="8" viewBox="0 0 10 8" fill="none"><path d="M1 1 L5 6.5 L9 1 Z" fill="#666"/></svg>
<div class="a" style="left:1570px;top:220px;width:350px;height:790px;background:#f7f7f7;"></div>
<div class="a" style="left:1570px;top:220px;width:1px;height:790px;background:#e1e1e1;"></div>
<div class="t" style="left:1584.00px;top:235.27px;font-size:15.99px;line-height:15.99px;color:#242424;transform:scaleX(0.9184);transform-origin:0 0;">Spreadsheet Sync</div>
<svg class="a" style="left:1856px;top:238px;" width="15" height="9" viewBox="0 0 15 9" fill="none"><path d="M1 1 L7.5 7.5 L14 1" stroke="#424242" stroke-width="1.2"/></svg>
<svg class="a" style="left:1890px;top:237px;" width="12" height="12" viewBox="0 0 12 12" fill="none"><path d="M1 1 L11 11 M11 1 L1 11" stroke="#424242" stroke-width="1.2"/></svg>
<div class="a" style="left:1584.5px;top:261.5px;width:321px;height:734px;background:#fff;border:1px solid #d4d4d8;"></div>
<div class="a" style="left:1585.5px;top:307px;width:319px;height:1px;background:#d4d7dc;"></div>
<div class="a" style="left:1585.5px;top:308px;width:319px;height:13px;background:#ebedf0;"></div>
<svg class="a" style="left:1599px;top:280px;" width="16" height="11" viewBox="0 0 16 11" fill="none"><path d="M0 1 H15.5 M0 5.5 H15.5 M0 10 H15.5" stroke="#393a3d" stroke-width="1.6"/></svg>
<div class="t" style="left:1689.75px;top:275.27px;font-size:15.99px;line-height:15.99px;color:#393a3d;transform:scaleX(0.9746);transform-origin:0 0;-webkit-text-stroke:.55px #393a3d;">ManageAbility, Inc.</div>
<div class="t" style="left:1597.20px;top:335.84px;font-size:17.44px;line-height:17.44px;color:#242424;transform:scaleX(0.9455);transform-origin:0 0;-webkit-text-stroke:.6px #242424;">Journal Entries</div>
<div class="t" style="left:1597.20px;top:366.13px;font-size:14.97px;line-height:14.97px;color:#6b6c72;transform:scaleX(0.9643);transform-origin:0 0;">Use this template to add or edit records. Once</div>
<div class="t" style="left:1597.20px;top:385.93px;font-size:14.97px;line-height:14.97px;color:#6b6c72;transform:scaleX(0.9438);transform-origin:0 0;">records are ready to sync then click 'Sync to</div>
<div class="t" style="left:1597.20px;top:405.53px;font-size:14.97px;line-height:14.97px;color:#6b6c72;transform:scaleX(0.8151);transform-origin:0 0;">IES'</div>
<svg class="a" style="left:1602px;top:451px;" width="14" height="14" viewBox="0 0 14 14" fill="none"><path d="M1.5 12.5 L2.3 9 L10 1.3 C10.8 .5 11.8 .5 12.5 1.3 C13.3 2 13.3 3 12.5 3.8 L4.8 11.5 Z M8.8 2.5 L11.3 5" stroke="#108a2e" stroke-width="1.3" stroke-linejoin="round"/></svg>
<div class="t" style="left:1621.60px;top:449.87px;font-size:14.10px;line-height:14.10px;color:#108a2e;transform:scaleX(0.8550);transform-origin:0 0;-webkit-text-stroke:.4px #108a2e;">Edit IES records and sync back</div>
<div class="a" style="left:1597px;top:477.5px;width:97px;height:24px;border:2px solid #108a2e;border-radius:4px;background:#fff;"></div>
<svg class="a" style="left:1604px;top:483px;" width="13" height="13" viewBox="0 0 13 13" fill="none"><path d="M11.2 5 A5 5 0 0 0 2 4 M1.8 8 A5 5 0 0 0 11 9" stroke="#108a2e" stroke-width="1.5"/><path d="M11.8 1 V5.3 H7.5 M1.2 12 V7.7 H5.5" stroke="#108a2e" stroke-width="1.5" stroke-linejoin="round"/></svg>
<div class="t" style="left:1623.70px;top:482.57px;font-size:14.10px;line-height:14.10px;color:#108a2e;transform:scaleX(0.8145);transform-origin:0 0;-webkit-text-stroke:.4px #108a2e;">Sync to IES</div>
<div class="a" style="left:1585.5px;top:535.5px;width:319px;height:1px;background:#d4d7dc;"></div>
<div class="a" style="left:1585.5px;top:536.5px;width:319px;height:399px;background:#ebecf0;"></div>
<div class="a" style="left:1585.5px;top:935.5px;width:319px;height:1px;background:#d4d7dc;"></div>
<div class="t" style="left:1597.80px;top:957.73px;font-size:16.86px;line-height:16.86px;color:#8d3fd8;transform:scaleX(0.9702);transform-origin:0 0;">Go Home</div>
<div class="a" style="left:0px;top:978px;width:1570px;height:32px;background:#f0f0f0;"></div>
<div class="a" style="left:0px;top:977.5px;width:1548px;height:1px;background:#dcdcdc;"></div>
<svg class="a" style="left:27px;top:988px;" width="8" height="11" viewBox="0 0 8 11" fill="none"><path d="M6.5 1 L1.5 5.5 L6.5 10" stroke="#a0a0a0" stroke-width="1.1"/></svg>
<svg class="a" style="left:60px;top:988px;" width="8" height="11" viewBox="0 0 8 11" fill="none"><path d="M1.5 1 L6.5 5.5 L1.5 10" stroke="#a0a0a0" stroke-width="1.1"/></svg>
<div class="a" style="left:116px;top:982px;width:125px;height:24px;background:#548235;border-radius:4px;"></div>
<div class="t" style="left:125.00px;top:987.70px;font-size:14.53px;line-height:14.53px;color:#ffffff;transform:scaleX(0.9739);transform-origin:0 0;">Notes &amp; Controls</div>
<div class="a" style="left:245px;top:985px;width:1px;height:18px;background:#c8c8c8;"></div>
<div class="a" style="left:250px;top:977px;width:162px;height:29px;background:#ffffff;border:1px solid #e3e3e3;border-top:none;border-radius:0 0 6px 6px;"></div>
<div class="t" style="left:258.30px;top:984.15px;font-size:14.83px;line-height:14.83px;color:#242424;transform:scaleX(0.9613);transform-origin:0 0;-webkit-text-stroke:.45px #242424;">Journal Entry Template</div>
<div class="a" style="left:258px;top:1001px;width:146px;height:2px;background:#107c41;"></div>
<div class="a" style="left:416.5px;top:985px;width:1px;height:18px;background:#c8c8c8;"></div>
<div class="t" style="left:428.30px;top:987.00px;font-size:14.53px;line-height:14.53px;color:#242424;transform:scaleX(0.8900);transform-origin:0 0;">Sheet1</div>
<div class="a" style="left:482px;top:985px;width:1px;height:18px;background:#c8c8c8;"></div>
<svg class="a" style="left:524px;top:987px;" width="12" height="12" viewBox="0 0 12 12" fill="none"><path d="M6 0 V12 M0 6 H12" stroke="#616161" stroke-width="1.1"/></svg>
<div class="a" style="left:944px;top:988px;width:2.2px;height:2.2px;background:#424242;border-radius:50%;"></div>
<div class="a" style="left:944px;top:993px;width:2.2px;height:2.2px;background:#424242;border-radius:50%;"></div>
<div class="a" style="left:944px;top:998px;width:2.2px;height:2.2px;background:#424242;border-radius:50%;"></div>
<div class="a" style="left:961px;top:985px;width:585px;height:16px;background:#f6f6f6;border-radius:8px;"></div>
<svg class="a" style="left:965px;top:988px;" width="7" height="11" viewBox="0 0 7 11" fill="none"><path d="M6.5 .5 V10.5 L.5 5.5 Z" fill="#616161"/></svg>
<div class="a" style="left:1205px;top:989px;width:326px;height:9px;background:#6e6e6e;border-radius:4.5px;"></div>
<svg class="a" style="left:1536px;top:988px;" width="7" height="11" viewBox="0 0 7 11" fill="none"><path d="M.5 .5 V10.5 L6.5 5.5 Z" fill="#616161"/></svg>
<div class="a" style="left:0px;top:1010px;width:1920px;height:23px;background:#f3f3f3;"></div>
<div class="a" style="left:0px;top:1010px;width:1920px;height:1px;background:#fbfbfb;"></div>
<div class="t" style="left:11.30px;top:1016.12px;font-size:12.50px;line-height:12.50px;color:#242424;transform:scaleX(0.8888);transform-origin:0 0;">Select destination and press ENTER or choose Paste</div>
<div class="a" style="left:1620px;top:1011px;width:40px;height:20px;background:#e0e0e0;"></div>
<svg class="a" style="left:1632px;top:1014px;" width="14" height="14" viewBox="0 0 14 14" fill="none"><path d="M.5 .5 H13.5 V13.5 H.5 Z M4.8 .5 V13.5 M9.2 .5 V13.5 M.5 4.8 H13.5 M.5 9.2 H13.5" stroke="#424242" stroke-width="1"/></svg>
<svg class="a" style="left:1672px;top:1014px;" width="15" height="14" viewBox="0 0 15 14" fill="none"><path d="M.5 .5 H14.5 V13.5 H.5 Z" stroke="#424242"/><path d="M3.5 3 H11.5 V11 H3.5 Z M5 5.5 H10 M5 7.5 H10 M5 9.5 H10" stroke="#424242" stroke-width=".9"/></svg>
<svg class="a" style="left:1712px;top:1013px;" width="15" height="15" viewBox="0 0 15 15" fill="none"><rect x=".6" y=".6" width="13.8" height="12.8" stroke="#242424" stroke-width="1.2"/><path d="M4 .6 V6 H8.5 V.6" stroke="#242424" stroke-width="1.1"/></svg>
<div class="a" style="left:1746px;top:1020px;width:7.5px;height:1.2px;background:#424242;"></div>
<div class="a" style="left:1759.5px;top:1020.5px;width:99px;height:1px;background:#8a8a8a;"></div>
<div class="a" style="left:1807.5px;top:1014.5px;width:4px;height:12px;background:#424242;border-radius:1px;"></div>
<svg class="a" style="left:1862px;top:1015px;" width="10" height="10" viewBox="0 0 10 10" fill="none"><path d="M5 0 V10 M0 5 H10" stroke="#424242" stroke-width="1.1"/></svg>
<div class="t" style="left:1885.50px;top:1015.16px;font-size:11.63px;line-height:11.63px;color:#242424;transform:scaleX(0.8911);transform-origin:0 0;">100%</div>
<div class="a" style="left:0px;top:1031.5px;width:1920px;height:1.3px;background:#cfcfcf;"></div>
<div class="a" style="left:0px;top:1032.8px;width:1920px;height:47.2px;background:#eeeeee;"></div>
<svg class="a" style="left:17px;top:1045px;" width="27" height="20" viewBox="0 0 27 20" fill="none"><defs><linearGradient id="wd" x1="0" y1="0" x2="1" y2="1"><stop offset="0" stop-color="#c4d4ee"/><stop offset="1" stop-color="#5e88bc"/></linearGradient></defs><circle cx="15" cy="6" r="3.6" fill="url(#wd)"/><circle cx="22" cy="11" r="3.4" fill="url(#wd)"/><circle cx="18" cy="15.5" r="2.8" fill="url(#wd)"/><path d="M2 9 H16" stroke="#86a6d2" stroke-width="1.9"/><path d="M2 13.2 H22" stroke="#7a9cca" stroke-width="1.9"/></svg>
<div class="t" style="left:50.70px;top:1042.37px;font-size:12.79px;line-height:12.79px;color:#242424;transform:scaleX(0.8654);transform-origin:0 0;">39°F</div>
<div class="t" style="left:50.70px;top:1057.77px;font-size:12.79px;line-height:12.79px;color:#616161;transform:scaleX(0.9708);transform-origin:0 0;">Windy</div>
<svg class="a" style="left:572px;top:1045px;" width="24" height="24" viewBox="0 0 24 24" fill="none"><rect x="0" y="0" width="11.3" height="11.3" fill="#1883d7"/><rect x="12.7" y="0" width="11.3" height="11.3" fill="#1883d7"/><rect x="0" y="12.7" width="11.3" height="11.3" fill="#1883d7"/><rect x="12.7" y="12.7" width="11.3" height="11.3" fill="#1883d7"/><rect x="0" y="0" width="24" height="24" fill="url(#wg)" opacity=".35"/><defs><linearGradient id="wg" x1="0" y1="0" x2="1" y2="1"><stop offset="0" stop-color="#7fd3ff"/><stop offset="1" stop-color="#0050a0"/></linearGradient></defs></svg>
<div class="a" style="left:610px;top:1041px;width:219px;height:31px;background:#fbfbfb;border:1px solid #dedede;border-radius:16px;"></div>
<svg class="a" style="left:620px;top:1048px;" width="17" height="17" viewBox="0 0 17 17" fill="none"><circle cx="7" cy="7" r="5.5" stroke="#242424" stroke-width="1.8"/><path d="M11 11 L15.5 15.5" stroke="#242424" stroke-width="2" stroke-linecap="round"/></svg>
<div class="t" style="left:646.00px;top:1049.40px;font-size:14.53px;line-height:14.53px;color:#616161;transform:scaleX(0.8794);transform-origin:0 0;">Search</div>
<svg class="a" style="left:840px;top:1044px;" width="25" height="24" viewBox="0 0 25 24" fill="none"><defs><linearGradient id="tv1" x1="0" y1="0" x2="1" y2="1"><stop offset="0" stop-color="#ffffff"/><stop offset="1" stop-color="#d8d8d8"/></linearGradient><linearGradient id="tv2" x1="0" y1="0" x2="1" y2="1"><stop offset="0" stop-color="#4a4a4a"/><stop offset="1" stop-color="#141414"/></linearGradient></defs><rect x="7" y=".8" width="17.5" height="15.6" rx="1" fill="url(#tv1)"/><rect x=".8" y="7" width="18.2" height="16.2" rx="1" fill="url(#tv2)"/><rect x="7" y="7" width="12" height="9.4" fill="#9a9a9a"/></svg>
<svg class="a" style="left:885px;top:1044px;" width="24" height="23" viewBox="0 0 24 23" fill="none"><path d="M.5 3 C.5 1.8 1.3 1 2.5 1 H8 L10 3.2 V6 H.5 Z" fill="#e3a21a"/><path d="M.5 4.5 H22 C23 4.5 23.5 5.2 23.5 6 V22.4 H.5 Z" fill="#ffc83d"/><rect x="4.3" y="14.5" width="15" height="8" rx="1.5" fill="#1a7fd4"/><rect x="7" y="17.5" width="9.5" height="1.2" fill="#0e5fa6"/></svg>
<div class="a" style="left:892px;top:1072px;width:8px;height:2.5px;background:#8a8a8a;border-radius:1.5px;"></div>
<svg class="a" style="left:928px;top:1043px;" width="26" height="26" viewBox="0 0 26 26" fill="none"><defs><linearGradient id="eg" x1="0" y1="0" x2="1" y2=".6"><stop offset="0" stop-color="#1fa6e8"/><stop offset=".55" stop-color="#2cc0b8"/><stop offset="1" stop-color="#6ed85a"/></linearGradient></defs><circle cx="13" cy="13" r="12.2" fill="url(#eg)"/><path d="M2.2 14 C2.2 8.5 7 5.8 11.5 6.5 C7.8 7.8 6.2 10.8 6.8 14.5 C7.5 19 11.5 22 16.5 21.2 C19.5 20.8 21.8 19.3 23.2 17.5 C21 22.5 17 25.2 13 25.2 C7 25.2 2.2 20 2.2 14 Z" fill="#0c5aa6"/><circle cx="13.6" cy="13.2" r="3" fill="#eeeeee"/><path d="M12 12.5 C14 16 18 17 21.5 16" stroke="#eeeeee" stroke-width="2.2"/><rect x=".5" y="16.5" width="11.5" height="8.6" rx="1" fill="#d17f0a"/><rect x=".5" y="16.5" width="11.5" height="3.8" fill="#f0a020"/><rect x="4.2" y="14.6" width="4.2" height="2.2" fill="none" stroke="#5a3a10" stroke-width="1"/><rect x="5.6" y="19.6" width="1.4" height="1.4" fill="#ffd84a"/></svg>
<svg class="a" style="left:971px;top:1042px;" width="30" height="27" viewBox="0 0 30 27" fill="none"><circle cx="11" cy="7" r="3.5" fill="#7b83eb"/><rect x="9" y="11" width="15" height="15" rx="5" fill="#5059c9"/><rect x="1" y="12" width="13" height="13" rx="2" fill="#4b53bc"/><text x="4" y="23" font-size="10" font-weight="bold" fill="#fff" font-family="Liberation Sans">T</text><circle cx="23.5" cy="6" r="5.5" fill="#d1001f"/></svg>
<div class="a" style="left:981px;top:1072px;width:8px;height:2.5px;background:#8a8a8a;border-radius:1.5px;"></div>
<svg class="a" style="left:1018px;top:1045px;" width="23" height="23" viewBox="0 0 23 23" fill="none"><rect x="1" y="1" width="19" height="14" fill="#2a6fc9"/><rect x="3" y="3" width="15" height="10" fill="#7fb8f0"/><path d="M6 15 L4 19 H17 L15 15" fill="#9e9e9e"/><circle cx="17" cy="17" r="5" fill="#6d6d6d"/><path d="M14.5 17 H19.5 M17.5 15 L19.5 17 L17.5 19" stroke="#7fdc5a" stroke-width="1.2"/></svg>
<svg class="a" style="left:1060px;top:1044px;" width="26" height="26" viewBox="0 0 26 26" fill="none"><circle cx="13" cy="13" r="11.5" stroke="#1e5fc8" stroke-width="2.2"/><path d="M18.5 8.5 A7 7 0 1 0 18.5 17.5" stroke="#1e5fc8" stroke-width="3"/><path d="M20 12 H10" stroke="#1e5fc8" stroke-width="2"/></svg>
<svg class="a" style="left:1104px;top:1041px;" width="30" height="29" viewBox="0 0 30 29" fill="none"><rect x="8" y="8" width="20" height="18" rx="2" fill="#1490df"/><rect x="2" y="12" width="14" height="14" rx="2" fill="#0a5fb8"/><text x="4.5" y="23" font-size="10" font-weight="bold" fill="#fff" font-family="Liberation Sans">O</text><circle cx="21.5" cy="6.5" r="6" fill="#50c3f0"/><path d="M18.5 4.5 H24.5 V8.5 H18.5 Z M18.5 4.5 L21.5 7 L24.5 4.5" stroke="#0b3f7a" stroke-width=".9"/></svg>
<div class="a" style="left:1113px;top:1072px;width:8px;height:2.5px;background:#8a8a8a;border-radius:1.5px;"></div>
<svg class="a" style="left:1148px;top:1044px;" width="25" height="25" viewBox="0 0 25 25" fill="none"><circle cx="12.5" cy="12.5" r="12" fill="#db4437"/><path d="M12.5 12.5 L2.1 18.5 A12 12 0 0 1 1.5 7 Z" fill="#0f9d58"/><path d="M12.5 12.5 L22.9 18.5 A12 12 0 0 1 2.1 18.5 Z" fill="#0f9d58"/><path d="M12.5 12.5 L12.5 0.5 A12 12 0 0 1 22.9 18.5 Z" fill="#ffcd40"/><circle cx="12.5" cy="12.5" r="5.5" fill="#fff"/><circle cx="12.5" cy="12.5" r="4.3" fill="#4285f4"/></svg>
<div class="a" style="left:1157px;top:1072px;width:8px;height:2.5px;background:#8a8a8a;border-radius:1.5px;"></div>
<svg class="a" style="left:1192px;top:1044px;" width="23" height="24" viewBox="0 0 23 24" fill="none"><rect x="6" y="1" width="16" height="21" rx="2.5" fill="#c26be0"/><rect x="1" y="7" width="12" height="12" rx="2" fill="#7719aa"/><text x="3" y="17" font-size="9" font-weight="bold" fill="#fff" font-family="Liberation Sans">N</text></svg>
<div class="a" style="left:1201px;top:1072px;width:8px;height:2.5px;background:#8a8a8a;border-radius:1.5px;"></div>
<div class="a" style="left:1229px;top:1036.5px;width:40px;height:38.5px;background:#e7b9b9;border-radius:4px;"></div>
<svg class="a" style="left:1238px;top:1043px;" width="24" height="24" viewBox="0 0 24 24" fill="none"><rect x="1" y="1" width="11" height="20" fill="#f0c24a"/><path d="M7 18 C7 14 10 12 13 13 C14 10 19 10 20 14 C22.5 14 23.5 16 23 18.5 C23 20 22 21 20.5 21 H9 C7.5 21 7 19.5 7 18 Z" fill="#1d8ce0"/></svg>
<div class="a" style="left:1229px;top:1072.5px;width:40px;height:2.5px;background:#c42b1c;border-radius:1.5px;"></div>
<svg class="a" style="left:1282px;top:1045px;" width="22" height="22" viewBox="0 0 22 22" fill="none"><rect x="0" y="0" width="22" height="22" rx="4" fill="#2e1a8c"/><circle cx="11" cy="11" r="6" stroke="#fff" stroke-width="2.2"/><path d="M13 13 L17 17" stroke="#fff" stroke-width="2.2"/></svg>
<div class="a" style="left:1289px;top:1072px;width:8px;height:2.5px;background:#8a8a8a;border-radius:1.5px;"></div>
<div class="a" style="left:1317.5px;top:1036.5px;width:36px;height:38.5px;background:#fafafa;border-radius:4px;box-shadow:1px 0 0 #dcdcdc;"></div>
<svg class="a" style="left:1325px;top:1045px;" width="22" height="22" viewBox="0 0 22 22" fill="none"><rect x="6" y="1" width="15" height="20" rx="2" fill="#21a366"/><rect x="13.5" y="1" width="7.5" height="10" fill="#33c481"/><rect x="6" y="11" width="15" height="10" fill="#107c41"/><rect x="1" y="6" width="11" height="11" rx="1.5" fill="#185c37"/><path d="M3.8 8.5 L9 14.5 M9 8.5 L3.8 14.5" stroke="#fff" stroke-width="1.6"/></svg>
<div class="a" style="left:1329px;top:1072.5px;width:16px;height:2.5px;background:#0f6cbd;border-radius:1.5px;"></div>
<div class="t" style="left:1850.00px;top:1042.47px;font-size:12.79px;line-height:12.79px;color:#242424;transform:scaleX(0.9511);transform-origin:0 0;">11:53 AM</div>
<div class="t" style="left:1846.00px;top:1058.37px;font-size:12.79px;line-height:12.79px;color:#242424;transform:scaleX(0.9578);transform-origin:0 0;">3/16/2026</div>
</body></html>
